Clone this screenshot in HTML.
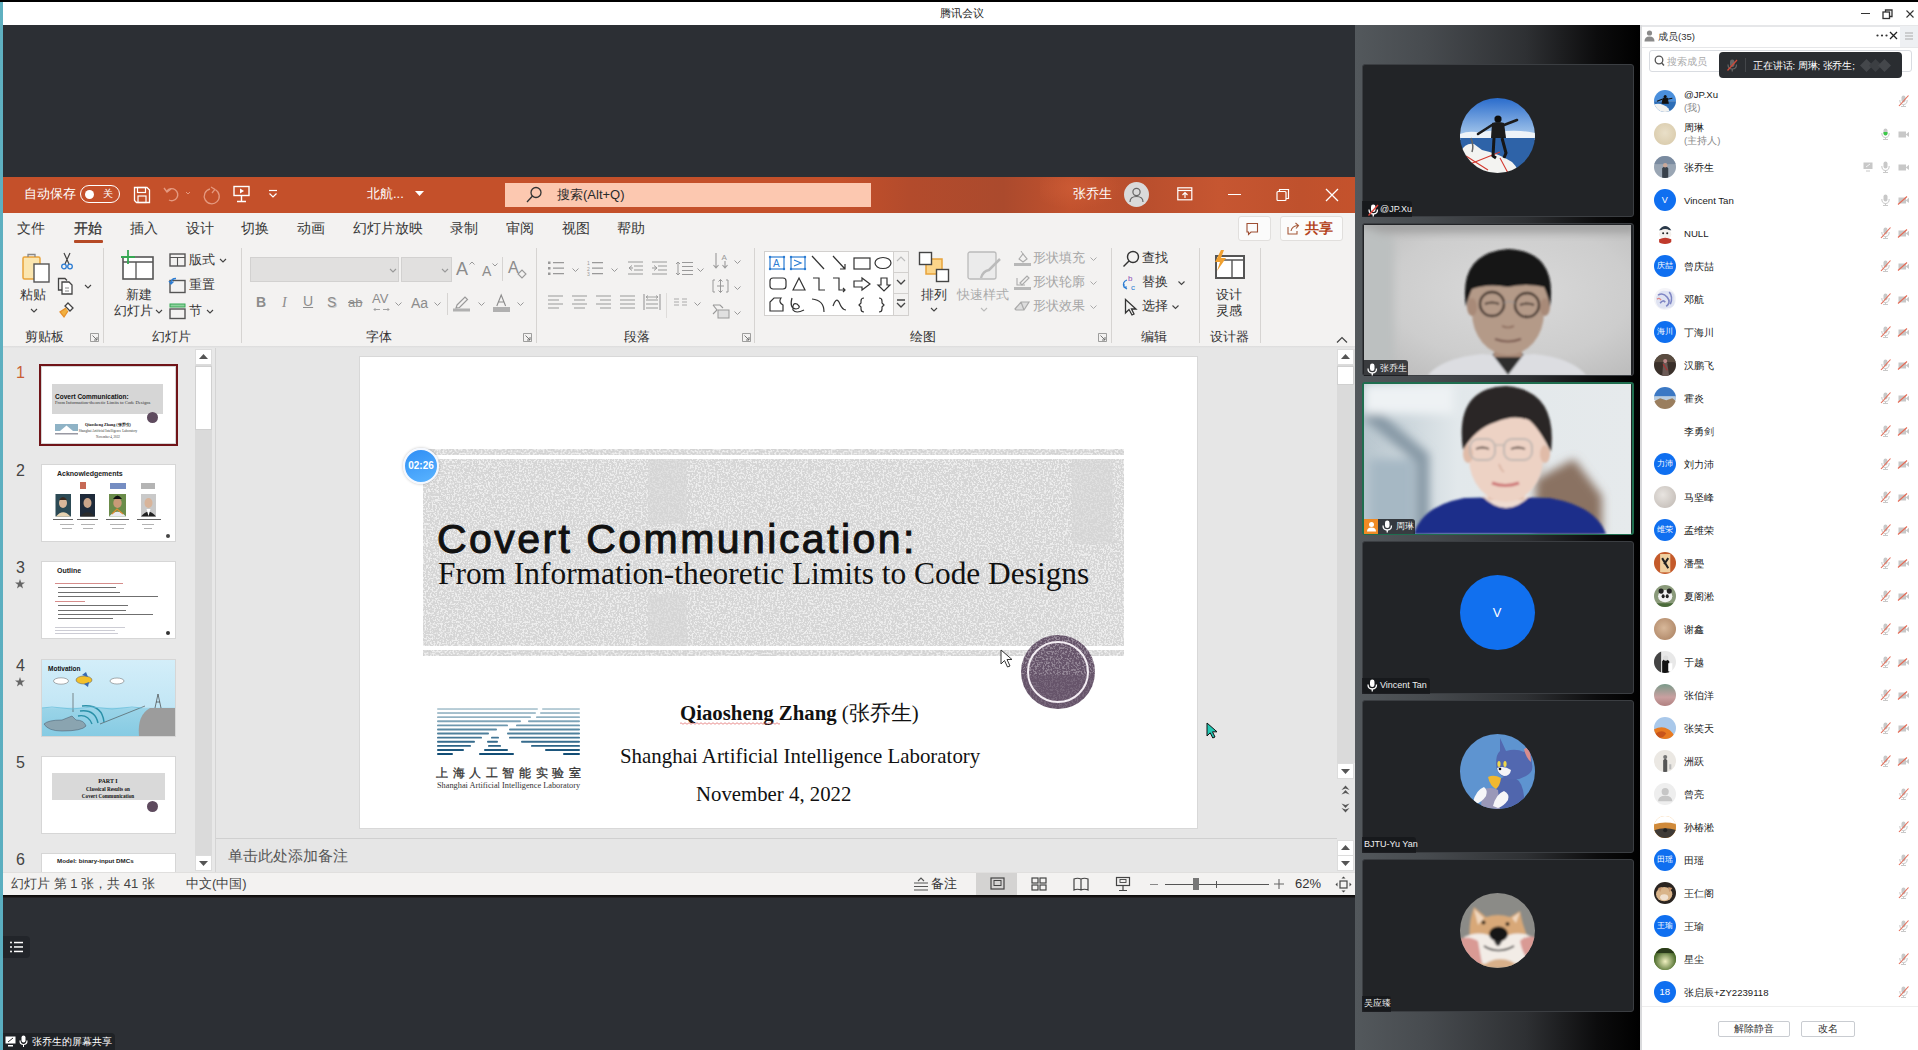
<!DOCTYPE html>
<html><head><meta charset="utf-8"><title>腾讯会议</title>
<style>
html,body{margin:0;padding:0;}
body{width:1918px;height:1050px;position:relative;overflow:hidden;background:#2c2f34;font-family:"Liberation Sans",sans-serif;}
.a{position:absolute;}
.t{position:absolute;white-space:nowrap;}
svg.a{overflow:visible;}
</style></head><body>
<div class="a" style="left:0px;top:0px;width:1918px;height:2px;background:#000;"></div><div class="a" style="left:0px;top:2px;width:1918px;height:23px;background:#fff;"></div><div class="a" style="left:0px;top:2px;width:3px;height:1048px;background:linear-gradient(#5fb0c0,#5aaec0);"></div><div class="t" style="left:662px;width:600px;text-align:center;top:6.0px;height:14px;line-height:14px;font-size:10.6px;color:#222;font-weight:normal;font-family:'Liberation Sans',sans-serif;">腾讯会议</div><div class="a" style="left:1861px;top:13px;width:9px;height:1.1999999999999993px;background:#333;"></div><svg class="a" style="left:1882px;top:9px;" width="12" height="10" viewBox="0 0 12 10"><rect x="1" y="3" width="6.5" height="6.5" fill="none" stroke="#333" stroke-width="1.3"/><path d="M3.5 3 V1 H10 V7.5 H7.5" fill="none" stroke="#333" stroke-width="1.3"/></svg><svg class="a" style="left:1905px;top:9px;" width="10" height="10" viewBox="0 0 10 10"><path d="M1.5 1.5 L8.5 8.5 M8.5 1.5 L1.5 8.5" stroke="#333" stroke-width="1.1"/></svg><div class="a" style="left:3px;top:936px;width:27px;height:22px;background:#22252a;border-radius:0 4px 4px 0;"></div><svg class="a" style="left:10px;top:941px;" width="14" height="12" viewBox="0 0 14 12"><g fill="#fff"><circle cx="1" cy="1.5" r="1"/><circle cx="1" cy="6" r="1"/><circle cx="1" cy="10.5" r="1"/><rect x="4" y="0.8" width="9" height="1.5"/><rect x="4" y="5.2" width="9" height="1.5"/><rect x="4" y="9.7" width="9" height="1.5"/></g></svg><div class="a" style="left:3px;top:1033px;width:112px;height:17px;background:#1f2226;border-radius:0 4px 0 0;"></div><svg class="a" style="left:5px;top:1036px;" width="12" height="11" viewBox="0 0 12 11"><rect x="0.5" y="0.5" width="10" height="7" fill="#fff"/><rect x="3" y="9" width="5" height="1.5" fill="#fff"/><path d="M3 6 L8 2" stroke="#333" stroke-width="1"/></svg><svg class="a" style="left:19px;top:1035px;" width="9" height="13" viewBox="0 0 9 13"><rect x="2.5" y="0.5" width="4" height="7" rx="2" fill="#fff"/><path d="M1 5.5 Q1 9.5 4.5 9.5 Q8 9.5 8 5.5" fill="none" stroke="#fff" stroke-width="1.2"/><rect x="4" y="9.5" width="1" height="2.5" fill="#fff"/></svg><div class="t" style="left:32px;top:1035.0px;height:14px;line-height:14px;font-size:10px;color:#fff;font-weight:normal;font-family:'Liberation Sans',sans-serif;">张乔生的屏幕共享</div><div class="a" style="left:3px;top:177px;width:1352px;height:36px;background:linear-gradient(90deg,#c4502a 0%,#c4502a 62%,#b34b2c 67%,#ab4a2d 74%,#c2522e 79%,#b84e2d 84%,#c65631 90%,#bf512d 96%,#c4522c 100%);"></div><div class="a" style="left:1040px;top:177px;width:90px;height:36px;background:radial-gradient(ellipse at 40% 30%,rgba(215,100,60,.45),rgba(215,100,60,0) 60%)"></div><div class="t" style="left:24px;top:185.0px;height:18px;line-height:18px;font-size:13px;color:#fff;font-weight:normal;font-family:'Liberation Sans',sans-serif;">自动保存</div><div class="a" style="left:80px;top:185px;width:40px;height:18px;background:transparent;border:1.2px solid #fff;border-radius:9px;box-sizing:border-box;"></div><div class="a" style="left:85px;top:190px;width:9px;height:9px;border-radius:50%;background:#fff"></div><div class="t" style="left:103px;top:187.0px;height:14px;line-height:14px;font-size:10px;color:#fff;font-weight:normal;font-family:'Liberation Sans',sans-serif;">关</div><svg class="a" style="left:133px;top:186px;" width="18" height="18" viewBox="0 0 18 18"><path d="M1.5 1.5 H14 L16.5 4 V16.5 H3.5 L1.5 14.5 Z" fill="none" stroke="#fff" stroke-width="1.3"/><rect x="4.5" y="1.5" width="8" height="5" fill="none" stroke="#fff" stroke-width="1.2"/><rect x="5" y="10" width="8" height="6.5" fill="none" stroke="#fff" stroke-width="1.2"/></svg><svg class="a" style="left:163px;top:185px;" width="30" height="18" viewBox="0 0 30 18"><path d="M4 6 A6 6 0 1 1 6 15" fill="none" stroke="#e59a80" stroke-width="1.4"/><path d="M1 3 L4 7 L8 4" fill="none" stroke="#e59a80" stroke-width="1.4"/><path d="M23 7 L25 9 L27 7" fill="none" stroke="#e59a80" stroke-width="1"/></svg><svg class="a" style="left:202px;top:186px;" width="20" height="20" viewBox="0 0 20 20"><path d="M8 3 A7.5 7.5 0 1 0 13.5 3.8" fill="none" stroke="#e59a80" stroke-width="1.3"/><path d="M9 1 L13 3.5 L10 7" fill="none" stroke="#e59a80" stroke-width="1.2"/></svg><svg class="a" style="left:233px;top:185px;" width="18" height="18" viewBox="0 0 18 18"><rect x="1" y="1.5" width="15" height="9" fill="none" stroke="#fff" stroke-width="1.4"/><path d="M7 3.5 L11 6 L7 8.5Z" fill="#fff"/><path d="M8.5 10.5 V16 M4 16.5 H13" stroke="#fff" stroke-width="1.4"/></svg><svg class="a" style="left:268px;top:189px;" width="10" height="10" viewBox="0 0 10 10"><path d="M1 1.5 H9" stroke="#fff" stroke-width="1.2"/><path d="M1.5 4.5 L5 8 L8.5 4.5" fill="none" stroke="#fff" stroke-width="1.2"/></svg><div class="t" style="left:367px;top:185.0px;height:18px;line-height:18px;font-size:13px;color:#fff;font-weight:normal;font-family:'Liberation Sans',sans-serif;">北航...</div><svg class="a" style="left:415px;top:191px;" width="10" height="6" viewBox="0 0 10 6"><path d="M0 0 H9 L4.5 5Z" fill="#fff"/></svg><div class="a" style="left:505px;top:183px;width:366px;height:24px;background:#fcc8b0;"></div><svg class="a" style="left:525px;top:186px;" width="18" height="18" viewBox="0 0 18 18"><circle cx="11" cy="6.5" r="5" fill="none" stroke="#333" stroke-width="1.3"/><path d="M7.5 10 L2 16" stroke="#333" stroke-width="1.3"/></svg><div class="t" style="left:557px;top:186.0px;height:18px;line-height:18px;font-size:13px;color:#2a2a2a;font-weight:normal;font-family:'Liberation Sans',sans-serif;">搜索(Alt+Q)</div><div class="t" style="left:1073px;top:185.0px;height:18px;line-height:18px;font-size:13px;color:#fff;font-weight:normal;font-family:'Liberation Sans',sans-serif;">张乔生</div><div class="a" style="left:1124px;top:182px;width:25px;height:25px;border-radius:50%;background:#dadada"></div><svg class="a" style="left:1128px;top:186px;" width="17" height="17" viewBox="0 0 17 17"><circle cx="8.5" cy="6" r="3.6" fill="none" stroke="#666" stroke-width="1.2"/><path d="M2 16 Q2 10.5 8.5 10.5 Q15 10.5 15 16" fill="none" stroke="#666" stroke-width="1.2"/></svg><svg class="a" style="left:1177px;top:187px;" width="16" height="14" viewBox="0 0 16 14"><rect x="0.8" y="0.8" width="14" height="12" fill="none" stroke="#fff" stroke-width="1.2"/><path d="M1 3.5 H15" stroke="#fff" stroke-width="1.2"/><path d="M8 11 V6 M5.5 8 L8 5.5 L10.5 8" fill="none" stroke="#fff" stroke-width="1.2"/></svg><div class="a" style="left:1228px;top:194px;width:13px;height:1.3000000000000114px;background:#fff;"></div><svg class="a" style="left:1276px;top:188px;" width="14" height="14" viewBox="0 0 14 14"><rect x="1" y="3.5" width="9" height="9" rx="1" fill="none" stroke="#fff" stroke-width="1.2"/><path d="M3.5 3.5 V1.5 H12.5 V10.5 H10" fill="none" stroke="#fff" stroke-width="1.2"/></svg><svg class="a" style="left:1325px;top:188px;" width="14" height="14" viewBox="0 0 14 14"><path d="M1 1 L13 13 M13 1 L1 13" stroke="#fff" stroke-width="1.3"/></svg><div class="a" style="left:3px;top:213px;width:1352px;height:134px;background:#f3f2f1;"></div><div class="a" style="left:3px;top:346px;width:1352px;height:2px;background:linear-gradient(#dcdcdc,#e6e6e6);"></div><div class="t" style="left:17px;top:218.5px;height:19px;line-height:19px;font-size:14px;color:#383838;font-weight:normal;font-family:'Liberation Sans',sans-serif;">文件</div><div class="t" style="left:74px;top:218.5px;height:19px;line-height:19px;font-size:14px;color:#383838;font-weight:normal;font-family:'Liberation Sans',sans-serif;-webkit-text-stroke:0.35px #383838;">开始</div><div class="t" style="left:130px;top:218.5px;height:19px;line-height:19px;font-size:14px;color:#383838;font-weight:normal;font-family:'Liberation Sans',sans-serif;">插入</div><div class="t" style="left:186px;top:218.5px;height:19px;line-height:19px;font-size:14px;color:#383838;font-weight:normal;font-family:'Liberation Sans',sans-serif;">设计</div><div class="t" style="left:241px;top:218.5px;height:19px;line-height:19px;font-size:14px;color:#383838;font-weight:normal;font-family:'Liberation Sans',sans-serif;">切换</div><div class="t" style="left:297px;top:218.5px;height:19px;line-height:19px;font-size:14px;color:#383838;font-weight:normal;font-family:'Liberation Sans',sans-serif;">动画</div><div class="t" style="left:353px;top:218.5px;height:19px;line-height:19px;font-size:14px;color:#383838;font-weight:normal;font-family:'Liberation Sans',sans-serif;">幻灯片放映</div><div class="t" style="left:450px;top:218.5px;height:19px;line-height:19px;font-size:14px;color:#383838;font-weight:normal;font-family:'Liberation Sans',sans-serif;">录制</div><div class="t" style="left:506px;top:218.5px;height:19px;line-height:19px;font-size:14px;color:#383838;font-weight:normal;font-family:'Liberation Sans',sans-serif;">审阅</div><div class="t" style="left:562px;top:218.5px;height:19px;line-height:19px;font-size:14px;color:#383838;font-weight:normal;font-family:'Liberation Sans',sans-serif;">视图</div><div class="t" style="left:617px;top:218.5px;height:19px;line-height:19px;font-size:14px;color:#383838;font-weight:normal;font-family:'Liberation Sans',sans-serif;">帮助</div><div class="a" style="left:74px;top:239.5px;width:29px;height:3.0px;background:#b54a26;border-radius:1px;"></div><div class="a" style="left:1238px;top:216px;width:33px;height:25px;background:#fbfbfb;border:1px solid #e1dfdd;box-sizing:border-box;border-radius:3px;"></div><svg class="a" style="left:1246px;top:222px;" width="14" height="14" viewBox="0 0 14 14"><path d="M1 1.5 H11.5 V10 H5 L2.5 12.5 V10 H1Z" fill="none" stroke="#9e4e32" stroke-width="1.1"/></svg><div class="a" style="left:1280px;top:216px;width:63px;height:25px;background:#fbfbfb;border:1px solid #e1dfdd;box-sizing:border-box;border-radius:3px;"></div><svg class="a" style="left:1287px;top:221px;" width="14" height="14" viewBox="0 0 14 14"><path d="M1 6 V13 H10 V10" fill="none" stroke="#a65a3a" stroke-width="1.1"/><path d="M4 10 Q5 5 11 4.5 M8.5 2 L11.5 4.5 L9 7.5" fill="none" stroke="#a65a3a" stroke-width="1.1"/></svg><div class="t" style="left:1305px;top:218.5px;height:19px;line-height:19px;font-size:14px;color:#b4451f;font-weight:bold;font-family:'Liberation Sans',sans-serif;">共享</div><div class="a" style="left:103px;top:248px;width:1px;height:95px;background:#d6d4d2;"></div><div class="a" style="left:241px;top:248px;width:1px;height:95px;background:#d6d4d2;"></div><div class="a" style="left:536px;top:248px;width:1px;height:95px;background:#d6d4d2;"></div><div class="a" style="left:754px;top:248px;width:1px;height:95px;background:#d6d4d2;"></div><div class="a" style="left:1111px;top:248px;width:1px;height:95px;background:#d6d4d2;"></div><div class="a" style="left:1199px;top:248px;width:1px;height:95px;background:#d6d4d2;"></div><div class="a" style="left:1260px;top:248px;width:1px;height:95px;background:#d6d4d2;"></div><div class="t" style="left:-256px;width:600px;text-align:center;top:328.0px;height:18px;line-height:18px;font-size:13px;color:#333;font-weight:normal;font-family:'Liberation Sans',sans-serif;">剪贴板</div><div class="t" style="left:-129px;width:600px;text-align:center;top:328.0px;height:18px;line-height:18px;font-size:13px;color:#333;font-weight:normal;font-family:'Liberation Sans',sans-serif;">幻灯片</div><div class="t" style="left:79px;width:600px;text-align:center;top:328.0px;height:18px;line-height:18px;font-size:13px;color:#333;font-weight:normal;font-family:'Liberation Sans',sans-serif;">字体</div><div class="t" style="left:337px;width:600px;text-align:center;top:328.0px;height:18px;line-height:18px;font-size:13px;color:#333;font-weight:normal;font-family:'Liberation Sans',sans-serif;">段落</div><div class="t" style="left:623px;width:600px;text-align:center;top:328.0px;height:18px;line-height:18px;font-size:13px;color:#333;font-weight:normal;font-family:'Liberation Sans',sans-serif;">绘图</div><div class="t" style="left:854px;width:600px;text-align:center;top:328.0px;height:18px;line-height:18px;font-size:13px;color:#333;font-weight:normal;font-family:'Liberation Sans',sans-serif;">编辑</div><div class="t" style="left:929px;width:600px;text-align:center;top:328.0px;height:18px;line-height:18px;font-size:13px;color:#333;font-weight:normal;font-family:'Liberation Sans',sans-serif;">设计器</div><svg class="a" style="left:90px;top:333px;" width="9" height="9" viewBox="0 0 9 9"><path d="M0.5 0.5 H8.5 V8.5 H0.5Z" fill="none" stroke="#888" stroke-width="0.8"/><path d="M2.5 2.5 L7 7 M7 4 V7 H4" fill="none" stroke="#666" stroke-width="0.9"/></svg><svg class="a" style="left:523px;top:333px;" width="9" height="9" viewBox="0 0 9 9"><path d="M0.5 0.5 H8.5 V8.5 H0.5Z" fill="none" stroke="#888" stroke-width="0.8"/><path d="M2.5 2.5 L7 7 M7 4 V7 H4" fill="none" stroke="#666" stroke-width="0.9"/></svg><svg class="a" style="left:742px;top:333px;" width="9" height="9" viewBox="0 0 9 9"><path d="M0.5 0.5 H8.5 V8.5 H0.5Z" fill="none" stroke="#888" stroke-width="0.8"/><path d="M2.5 2.5 L7 7 M7 4 V7 H4" fill="none" stroke="#666" stroke-width="0.9"/></svg><svg class="a" style="left:1098px;top:333px;" width="9" height="9" viewBox="0 0 9 9"><path d="M0.5 0.5 H8.5 V8.5 H0.5Z" fill="none" stroke="#888" stroke-width="0.8"/><path d="M2.5 2.5 L7 7 M7 4 V7 H4" fill="none" stroke="#666" stroke-width="0.9"/></svg><svg class="a" style="left:1336px;top:336px;" width="12" height="8" viewBox="0 0 12 8"><path d="M1 6.5 L6 1.5 L11 6.5" fill="none" stroke="#444" stroke-width="1.2"/></svg><svg class="a" style="left:21px;top:252px;" width="32" height="32" viewBox="0 0 32 32"><rect x="2" y="5" width="17" height="22" rx="1.5" fill="#fbe6b0" stroke="#e8a33a" stroke-width="1.5"/><path d="M7 5 V2.5 H14 V5" fill="none" stroke="#888" stroke-width="1.3"/><rect x="13" y="12" width="15" height="18" fill="#fff" stroke="#555" stroke-width="1.4"/></svg><div class="t" style="left:-267px;width:600px;text-align:center;top:286.0px;height:18px;line-height:18px;font-size:13px;color:#333;font-weight:normal;font-family:'Liberation Sans',sans-serif;">粘贴</div><svg class="a" style="left:30px;top:308px;" width="8" height="5" viewBox="0 0 8 5"><path d="M1 1 L4 4 L7 1" fill="none" stroke="#444" stroke-width="1.1"/></svg><svg class="a" style="left:60px;top:252px;" width="14" height="18" viewBox="0 0 14 18"><path d="M4 1 L9 12 M10 1 L5 12" stroke="#444" stroke-width="1.2"/><circle cx="4" cy="14.5" r="2.3" fill="none" stroke="#2b7cd3" stroke-width="1.3"/><circle cx="10" cy="14.5" r="2.3" fill="none" stroke="#2b7cd3" stroke-width="1.3"/></svg><svg class="a" style="left:57px;top:277px;" width="20" height="18" viewBox="0 0 20 18"><path d="M5 13 H1.5 V1.5 H8 L10 3.5" fill="none" stroke="#444" stroke-width="1.3"/><path d="M5 5 H12 L15 8 V17 H5Z" fill="#fff" stroke="#444" stroke-width="1.3"/><path d="M8 11 H12 M8 14 H12" stroke="#888"/></svg><svg class="a" style="left:84px;top:284px;" width="8" height="5" viewBox="0 0 8 5"><path d="M1 1 L4 4 L7 1" fill="none" stroke="#444" stroke-width="1.1"/></svg><svg class="a" style="left:58px;top:301px;" width="18" height="18" viewBox="0 0 18 18"><path d="M10 2 L15 7 L12 10 L7 5Z" fill="#fff" stroke="#444" stroke-width="1.3"/><path d="M8 7 L2 11 L6 16 L10 10" fill="#f0b040" stroke="#e8902a" stroke-width="1.3"/></svg><svg class="a" style="left:121px;top:249px;" width="34" height="32" viewBox="0 0 34 32"><rect x="2" y="8" width="30" height="22" fill="#fff" stroke="#555" stroke-width="1.6"/><path d="M2 13 H32 M15 13 V30" stroke="#555" stroke-width="1.3"/><path d="M7 1 V15 M0 8 H14" stroke="#35a852" stroke-width="1.8"/></svg><div class="t" style="left:-161px;width:600px;text-align:center;top:286.0px;height:18px;line-height:18px;font-size:13px;color:#333;font-weight:normal;font-family:'Liberation Sans',sans-serif;">新建</div><div class="t" style="left:114px;top:302.0px;height:18px;line-height:18px;font-size:13px;color:#333;font-weight:normal;font-family:'Liberation Sans',sans-serif;">幻灯片</div><svg class="a" style="left:155px;top:309px;" width="8" height="5" viewBox="0 0 8 5"><path d="M1 1 L4 4 L7 1" fill="none" stroke="#444" stroke-width="1.1"/></svg><svg class="a" style="left:169px;top:253px;" width="17" height="14" viewBox="0 0 17 14"><rect x="1" y="1" width="15" height="12" fill="none" stroke="#555" stroke-width="1.4"/><path d="M1 4.5 H16 M8.5 4.5 V13" stroke="#555" stroke-width="1.1"/></svg><div class="t" style="left:189px;top:251.0px;height:18px;line-height:18px;font-size:13px;color:#333;font-weight:normal;font-family:'Liberation Sans',sans-serif;">版式</div><svg class="a" style="left:219px;top:258px;" width="8" height="5" viewBox="0 0 8 5"><path d="M1 1 L4 4 L7 1" fill="none" stroke="#444" stroke-width="1.1"/></svg><svg class="a" style="left:168px;top:277px;" width="19" height="16" viewBox="0 0 19 16"><rect x="2" y="3.5" width="15" height="12" fill="none" stroke="#555" stroke-width="1.4"/><path d="M8 1.5 Q3 1.5 3 6 M1 4 L3 7 L5.5 4.5" fill="none" stroke="#2b7cd3" stroke-width="1.3"/></svg><div class="t" style="left:189px;top:276.0px;height:18px;line-height:18px;font-size:13px;color:#333;font-weight:normal;font-family:'Liberation Sans',sans-serif;">重置</div><svg class="a" style="left:169px;top:303px;" width="17" height="16" viewBox="0 0 17 16"><rect x="1" y="1" width="15" height="3" fill="#8fd19e" stroke="#35a852" stroke-width="1"/><rect x="1" y="6" width="15" height="9.5" fill="none" stroke="#555" stroke-width="1.4"/></svg><div class="t" style="left:189px;top:302.0px;height:18px;line-height:18px;font-size:13px;color:#333;font-weight:normal;font-family:'Liberation Sans',sans-serif;">节</div><svg class="a" style="left:206px;top:309px;" width="8" height="5" viewBox="0 0 8 5"><path d="M1 1 L4 4 L7 1" fill="none" stroke="#444" stroke-width="1.1"/></svg><div class="a" style="left:250px;top:257px;width:149px;height:25px;background:#e1e0df;border:1px solid #d2d1d0;box-sizing:border-box;"></div><div class="a" style="left:401px;top:257px;width:51px;height:25px;background:#e1e0df;border:1px solid #d2d1d0;box-sizing:border-box;"></div><svg class="a" style="left:389px;top:268px;" width="8" height="5" viewBox="0 0 8 5"><path d="M1 1 L4 4 L7 1" fill="none" stroke="#999" stroke-width="1.1"/></svg><svg class="a" style="left:441px;top:268px;" width="8" height="5" viewBox="0 0 8 5"><path d="M1 1 L4 4 L7 1" fill="none" stroke="#999" stroke-width="1.1"/></svg><div class="t" style="left:456px;top:256.5px;height:25px;line-height:25px;font-size:18px;color:#8c8c8c;font-weight:normal;font-family:'Liberation Sans',sans-serif;">A</div><svg class="a" style="left:469px;top:261px;" width="6" height="4" viewBox="0 0 6 4"><path d="M0.5 3.5 L3 1 L5.5 3.5" fill="none" stroke="#999" stroke-width="1"/></svg><div class="t" style="left:482px;top:261.5px;height:19px;line-height:19px;font-size:14px;color:#8c8c8c;font-weight:normal;font-family:'Liberation Sans',sans-serif;">A</div><svg class="a" style="left:492px;top:263px;" width="6" height="4" viewBox="0 0 6 4"><path d="M0.5 0.5 L3 3 L5.5 0.5" fill="none" stroke="#999" stroke-width="1"/></svg><div class="a" style="left:502px;top:257px;width:1px;height:24px;background:#d6d4d2;"></div><div class="t" style="left:508px;top:257.0px;height:22px;line-height:22px;font-size:16px;color:#8c8c8c;font-weight:normal;font-family:'Liberation Sans',sans-serif;">A</div><svg class="a" style="left:516px;top:268px;" width="12" height="10" viewBox="0 0 12 10"><path d="M2 6 L6 2 L10 6 L6 10Z" fill="none" stroke="#999" stroke-width="1.1"/></svg><div class="t" style="left:256px;top:292.5px;height:19px;line-height:19px;font-size:14px;color:#8c8c8c;font-weight:bold;font-family:'Liberation Sans',sans-serif;">B</div><div class="t" style="left:282px;top:292.5px;height:19px;line-height:19px;font-size:14px;color:#8c8c8c;font-weight:normal;font-family:'Liberation Serif',serif;"><i>I</i></div><div class="t" style="left:303px;top:291.5px;height:19px;line-height:19px;font-size:14px;color:#8c8c8c;font-weight:normal;font-family:'Liberation Sans',sans-serif;"><u>U</u></div><div class="t" style="left:327px;top:292.5px;height:19px;line-height:19px;font-size:14px;color:#8c8c8c;font-weight:normal;font-family:'Liberation Sans',sans-serif;text-shadow:1px 1px 0 #c8c8c8;">S</div><div class="t" style="left:348px;top:294.0px;height:18px;line-height:18px;font-size:13px;color:#8c8c8c;font-weight:normal;font-family:'Liberation Sans',sans-serif;"><s>ab</s></div><div class="t" style="left:372px;top:290.0px;height:18px;line-height:18px;font-size:13px;color:#8c8c8c;font-weight:normal;font-family:'Liberation Sans',sans-serif;">AV</div><svg class="a" style="left:373px;top:307px;" width="17" height="5" viewBox="0 0 17 5"><path d="M1 2.5 H7 M2.5 1 L1 2.5 L2.5 4 M10 2.5 H16 M14.5 1 L16 2.5 L14.5 4" fill="none" stroke="#999" stroke-width="0.9"/></svg><div class="t" style="left:411px;top:293.5px;height:19px;line-height:19px;font-size:14px;color:#8c8c8c;font-weight:normal;font-family:'Liberation Sans',sans-serif;">Aa</div><svg class="a" style="left:395px;top:302px;" width="7" height="4" viewBox="0 0 7 4"><path d="M0.5 0.5 L3.5 3.5 L6.5 0.5" fill="none" stroke="#999" stroke-width="1"/></svg><svg class="a" style="left:434px;top:302px;" width="7" height="4" viewBox="0 0 7 4"><path d="M0.5 0.5 L3.5 3.5 L6.5 0.5" fill="none" stroke="#999" stroke-width="1"/></svg><svg class="a" style="left:478px;top:302px;" width="7" height="4" viewBox="0 0 7 4"><path d="M0.5 0.5 L3.5 3.5 L6.5 0.5" fill="none" stroke="#999" stroke-width="1"/></svg><svg class="a" style="left:517px;top:302px;" width="7" height="4" viewBox="0 0 7 4"><path d="M0.5 0.5 L3.5 3.5 L6.5 0.5" fill="none" stroke="#999" stroke-width="1"/></svg><div class="a" style="left:447px;top:293px;width:1px;height:22px;background:#d6d4d2;"></div><svg class="a" style="left:452px;top:294px;" width="19" height="18" viewBox="0 0 19 18"><path d="M5 11 L13 3 L15.5 5.5 L7.5 13.5 L4 14Z" fill="none" stroke="#999" stroke-width="1.2"/><rect x="1" y="14.5" width="17" height="3" fill="#b0b0b0"/></svg><svg class="a" style="left:496px;top:294px;" width="11" height="13" viewBox="0 0 11 13"><path d="M0.8 12 L5.2 1 L9.6 12 M2.5 8 H8" fill="none" stroke="#8c8c8c" stroke-width="1.1"/></svg><div class="a" style="left:493px;top:307px;width:17px;height:4.5px;background:#b0b0b0;"></div><svg class="a" style="left:548px;top:261px;" width="17" height="15" viewBox="0 0 17 15"><g fill="#999"><rect x="0" y="0.5" width="2.5" height="2.5"/><rect x="0" y="6" width="2.5" height="2.5"/><rect x="0" y="11.5" width="2.5" height="2.5"/></g><path d="M5 1.7 H16 M5 7.2 H16 M5 12.7 H16" stroke="#999" stroke-width="1.2"/></svg><svg class="a" style="left:587px;top:260px;" width="17" height="16" viewBox="0 0 17 16"><text x="0" y="5" font-size="5" fill="#999">1</text><text x="0" y="10.5" font-size="5" fill="#999">2</text><text x="0" y="16" font-size="5" fill="#999">3</text><path d="M5 2.7 H16 M5 8.2 H16 M5 13.7 H16" stroke="#999" stroke-width="1.2"/></svg><svg class="a" style="left:628px;top:261px;" width="16" height="15" viewBox="0 0 16 15"><path d="M0 1 H15 M6 5 H15 M6 9 H15 M0 13 H15" stroke="#999" stroke-width="1.2"/><path d="M4 4.5 L1 7 L4 9.5 M1 7 H5" fill="none" stroke="#999" stroke-width="1"/></svg><svg class="a" style="left:652px;top:261px;" width="16" height="15" viewBox="0 0 16 15"><path d="M0 1 H15 M6 5 H15 M6 9 H15 M0 13 H15" stroke="#999" stroke-width="1.2"/><path d="M2 4.5 L5 7 L2 9.5 M0 7 H5" fill="none" stroke="#999" stroke-width="1"/></svg><svg class="a" style="left:675px;top:261px;" width="19" height="15" viewBox="0 0 19 15"><path d="M7 1.5 H18 M7 5.5 H18 M7 9.5 H18 M7 13.5 H18" stroke="#999" stroke-width="1.2"/><path d="M3 1 V14 M1 3 L3 1 L5 3 M1 12 L3 14 L5 12" fill="none" stroke="#999" stroke-width="1"/></svg><svg class="a" style="left:572px;top:268px;" width="7" height="4" viewBox="0 0 7 4"><path d="M0.5 0.5 L3.5 3.5 L6.5 0.5" fill="none" stroke="#999" stroke-width="1"/></svg><svg class="a" style="left:611px;top:268px;" width="7" height="4" viewBox="0 0 7 4"><path d="M0.5 0.5 L3.5 3.5 L6.5 0.5" fill="none" stroke="#999" stroke-width="1"/></svg><svg class="a" style="left:697px;top:268px;" width="7" height="4" viewBox="0 0 7 4"><path d="M0.5 0.5 L3.5 3.5 L6.5 0.5" fill="none" stroke="#999" stroke-width="1"/></svg><svg class="a" style="left:734px;top:260px;" width="7" height="4" viewBox="0 0 7 4"><path d="M0.5 0.5 L3.5 3.5 L6.5 0.5" fill="none" stroke="#999" stroke-width="1"/></svg><svg class="a" style="left:734px;top:286px;" width="7" height="4" viewBox="0 0 7 4"><path d="M0.5 0.5 L3.5 3.5 L6.5 0.5" fill="none" stroke="#999" stroke-width="1"/></svg><svg class="a" style="left:694px;top:302px;" width="7" height="4" viewBox="0 0 7 4"><path d="M0.5 0.5 L3.5 3.5 L6.5 0.5" fill="none" stroke="#999" stroke-width="1"/></svg><svg class="a" style="left:734px;top:311px;" width="7" height="4" viewBox="0 0 7 4"><path d="M0.5 0.5 L3.5 3.5 L6.5 0.5" fill="none" stroke="#999" stroke-width="1"/></svg><svg class="a" style="left:713px;top:252px;" width="17" height="18" viewBox="0 0 17 18"><path d="M3 1 V16 M0.5 13 L3 16 L5.5 13 M12 9 V16 M9.5 13 L12 16 L14.5 13" fill="none" stroke="#999" stroke-width="1.1"/><text x="8.5" y="8" font-size="8" fill="#999" font-family="Liberation Sans">A</text></svg><svg class="a" style="left:712px;top:279px;" width="17" height="15" viewBox="0 0 17 15"><path d="M3 1 H1 V13 H3 M14 1 H16 V13 H14 M8.5 0.5 V13.5 M6.5 2.5 L8.5 0.5 L10.5 2.5 M6.5 11.5 L8.5 13.5 L10.5 11.5 M5 7 H12" fill="none" stroke="#999" stroke-width="1"/></svg><svg class="a" style="left:712px;top:304px;" width="18" height="15" viewBox="0 0 18 15"><path d="M1 1 H8 L11 4 M1 1 L5 6 L1 10" fill="none" stroke="#999" stroke-width="1.1"/><rect x="6" y="6" width="11" height="8" fill="#e0e0e0" stroke="#999" stroke-width="1"/></svg><svg class="a" style="left:548px;top:295px;" width="17" height="14" viewBox="0 0 17 14"><path d="M0 1 H15 M0 5 H11 M0 9 H15 M0 13 H11" stroke="#999" stroke-width="1.2"/></svg><svg class="a" style="left:572px;top:295px;" width="17" height="14" viewBox="0 0 17 14"><path d="M0 1 H15 M2 5 H13 M0 9 H15 M2 13 H13" stroke="#999" stroke-width="1.2"/></svg><svg class="a" style="left:596px;top:295px;" width="17" height="14" viewBox="0 0 17 14"><path d="M0 1 H15 M4 5 H15 M0 9 H15 M4 13 H15" stroke="#999" stroke-width="1.2"/></svg><svg class="a" style="left:620px;top:295px;" width="17" height="14" viewBox="0 0 17 14"><path d="M0 1 H15 M0 5 H15 M0 9 H15 M0 13 H15" stroke="#999" stroke-width="1.2"/></svg><svg class="a" style="left:643px;top:294px;" width="18" height="17" viewBox="0 0 18 17"><path d="M1 0 V16 M17 0 V16 M3 6 H15 M3 10 H15 M3 14 H15" stroke="#999" stroke-width="1.1"/><path d="M3 3 H15 M5 1.5 L3 3 L5 4.5 M13 1.5 L15 3 L13 4.5" fill="none" stroke="#999" stroke-width="0.9"/></svg><div class="a" style="left:666px;top:293px;width:1px;height:25px;background:#dedcda;"></div><svg class="a" style="left:674px;top:298px;" width="14" height="8" viewBox="0 0 14 8"><path d="M0 1 H5 M0 4 H5 M0 7 H5 M8 1 H13 M8 4 H13 M8 7 H13" stroke="#aaa" stroke-width="1"/></svg><div class="a" style="left:764px;top:251px;width:130px;height:65px;background:#fff;border:1px solid #d2d0ce;box-sizing:border-box;"></div><div class="a" style="left:893px;top:251px;width:16px;height:65px;background:#f3f2f1;border:1px solid #d2d0ce;box-sizing:border-box;"></div><div class="a" style="left:894px;top:272px;width:14px;height:1px;background:#d2d0ce;"></div><div class="a" style="left:894px;top:293px;width:14px;height:1px;background:#d2d0ce;"></div><svg class="a" style="left:896px;top:256px;" width="10" height="6" viewBox="0 0 10 6"><path d="M1 5 L5 1 L9 5" fill="none" stroke="#bbb" stroke-width="1.1"/></svg><svg class="a" style="left:896px;top:279px;" width="10" height="6" viewBox="0 0 10 6"><path d="M1 1 L5 5 L9 1" fill="none" stroke="#444" stroke-width="1.3"/></svg><svg class="a" style="left:896px;top:299px;" width="10" height="9" viewBox="0 0 10 9"><path d="M1 1 H9 M1 4 L5 8 L9 4" fill="none" stroke="#444" stroke-width="1.3"/></svg><svg class="a" style="left:766px;top:252px;" width="128" height="64" viewBox="0 0 128 64"><g fill="none" stroke="#333" stroke-width="1.2"><rect x="4" y="5" width="14" height="12" stroke="#2b7cd3"/><text x="7" y="15" font-size="10" fill="#2b7cd3" stroke="none" font-family="Liberation Sans">A</text><rect x="25" y="5" width="14" height="12" stroke="#2b7cd3"/><path d="M28 8 L35 11 L28 14" stroke="#2b7cd3"/><circle cx="4" cy="5" r="1.2" fill="#2b7cd3" stroke="none"/><circle cx="4" cy="17" r="1.2" fill="#2b7cd3" stroke="none"/><circle cx="18" cy="5" r="1.2" fill="#2b7cd3" stroke="none"/><circle cx="18" cy="17" r="1.2" fill="#2b7cd3" stroke="none"/><circle cx="25" cy="5" r="1.2" fill="#2b7cd3" stroke="none"/><circle cx="25" cy="17" r="1.2" fill="#2b7cd3" stroke="none"/><circle cx="39" cy="5" r="1.2" fill="#2b7cd3" stroke="none"/><circle cx="39" cy="17" r="1.2" fill="#2b7cd3" stroke="none"/><path d="M46 4 L58 17"/><path d="M67 4 L79 17 M79 12 V17 H74"/><rect x="88" y="6" width="16" height="11"/><ellipse cx="117" cy="11" rx="8" ry="5.5"/><rect x="4" y="26" width="16" height="11" rx="3"/><path d="M27 38 L33 26 L39 38Z"/><path d="M47 26 H53 V38 H59"/><path d="M67 26 H73 V38 H79 M77 36 L79 38 L77 40"/><path d="M88 29 H96 V26 L104 32 L96 38 V35 H88Z"/><path d="M115 26 H121 V33 H124 L118 39 L112 33 H115Z"/><path d="M4 59 V50 L8 46 H15 Q12 50 17 53 V59Z"/><path d="M26 46 Q23 56 30 57 Q36 56 31 52 Q26 50 27 58 Q30 62 38 58"/><path d="M46 47 Q58 48 58 60"/><path d="M67 54 Q70 45 73 50 Q76 58 80 58"/><path d="M98 46 Q95 46 95 49 V51 L93 53 L95 55 V57 Q95 60 98 60"/><path d="M113 46 Q116 46 116 49 V51 L118 53 L116 55 V57 Q116 60 113 60"/></g></svg><svg class="a" style="left:918px;top:251px;" width="32" height="32" viewBox="0 0 32 32"><rect x="8" y="8" width="16" height="15" fill="#fbd58a" stroke="#e8a33a" stroke-width="1.5"/><rect x="1.5" y="1.5" width="12" height="12" fill="#fff" stroke="#444" stroke-width="1.4"/><rect x="18.5" y="18.5" width="12" height="12" fill="#fff" stroke="#444" stroke-width="1.4"/></svg><div class="t" style="left:634px;width:600px;text-align:center;top:286.0px;height:18px;line-height:18px;font-size:13px;color:#333;font-weight:normal;font-family:'Liberation Sans',sans-serif;">排列</div><svg class="a" style="left:930px;top:307px;" width="8" height="5" viewBox="0 0 8 5"><path d="M1 1 L4 4 L7 1" fill="none" stroke="#444" stroke-width="1.1"/></svg><svg class="a" style="left:967px;top:251px;" width="34" height="34" viewBox="0 0 34 34"><rect x="1" y="1" width="28" height="27" rx="2" fill="#ebebeb" stroke="#bbb" stroke-width="1.3"/><path d="M14 27 Q16 20 22 19 L33 8" fill="none" stroke="#bbb" stroke-width="2.5"/></svg><div class="t" style="left:683px;width:600px;text-align:center;top:286.0px;height:18px;line-height:18px;font-size:13px;color:#aaa;font-weight:normal;font-family:'Liberation Sans',sans-serif;">快速样式</div><svg class="a" style="left:980px;top:307px;" width="8" height="5" viewBox="0 0 8 5"><path d="M1 1 L4 4 L7 1" fill="none" stroke="#bbb" stroke-width="1.1"/></svg><div class="t" style="left:1033px;top:249.0px;height:18px;line-height:18px;font-size:13px;color:#a6a6a6;font-weight:normal;font-family:'Liberation Sans',sans-serif;">形状填充</div><svg class="a" style="left:1090px;top:257px;" width="7" height="4" viewBox="0 0 7 4"><path d="M0.5 0.5 L3.5 3.5 L6.5 0.5" fill="none" stroke="#aaa" stroke-width="1"/></svg><div class="t" style="left:1033px;top:273.0px;height:18px;line-height:18px;font-size:13px;color:#a6a6a6;font-weight:normal;font-family:'Liberation Sans',sans-serif;">形状轮廓</div><svg class="a" style="left:1090px;top:281px;" width="7" height="4" viewBox="0 0 7 4"><path d="M0.5 0.5 L3.5 3.5 L6.5 0.5" fill="none" stroke="#aaa" stroke-width="1"/></svg><div class="t" style="left:1033px;top:297.0px;height:18px;line-height:18px;font-size:13px;color:#a6a6a6;font-weight:normal;font-family:'Liberation Sans',sans-serif;">形状效果</div><svg class="a" style="left:1090px;top:305px;" width="7" height="4" viewBox="0 0 7 4"><path d="M0.5 0.5 L3.5 3.5 L6.5 0.5" fill="none" stroke="#aaa" stroke-width="1"/></svg><svg class="a" style="left:1014px;top:250px;" width="17" height="16" viewBox="0 0 17 16"><path d="M5 9 L9 4 L13 9 L9 12Z" fill="none" stroke="#aaa" stroke-width="1.2"/><path d="M9 4 L7 1" stroke="#aaa"/><rect x="0" y="13" width="17" height="3" fill="#b8b8b8"/></svg><svg class="a" style="left:1014px;top:274px;" width="17" height="16" viewBox="0 0 17 16"><path d="M3 4 V11 H11" fill="none" stroke="#aaa" stroke-width="1.1"/><path d="M6 9 L13 2 L15 4 L8 11Z" fill="none" stroke="#aaa" stroke-width="1.2"/><rect x="0" y="13" width="17" height="3" fill="#b8b8b8"/></svg><svg class="a" style="left:1014px;top:298px;" width="17" height="16" viewBox="0 0 17 16"><path d="M1 11 L7 4 H15 L10 12 H2Z M7 4 L10 12" fill="#ddd" stroke="#aaa" stroke-width="1.2"/></svg><svg class="a" style="left:1122px;top:250px;" width="18" height="18" viewBox="0 0 18 18"><circle cx="11" cy="7" r="5.5" fill="none" stroke="#333" stroke-width="1.4"/><path d="M7 11 L1.5 16.5" stroke="#333" stroke-width="1.5"/></svg><div class="t" style="left:1142px;top:249.0px;height:18px;line-height:18px;font-size:13px;color:#333;font-weight:normal;font-family:'Liberation Sans',sans-serif;">查找</div><svg class="a" style="left:1121px;top:274px;" width="18" height="18" viewBox="0 0 18 18"><text x="7" y="7" font-size="8" fill="#8b4fb5" font-family="Liberation Sans">b</text><text x="10" y="16" font-size="8" fill="#2b7cd3" font-family="Liberation Sans">c</text><path d="M6 6 Q1 8 3 13 L6 15 M3 10 L3 13 L6 13" fill="none" stroke="#2b7cd3" stroke-width="1.2"/></svg><div class="t" style="left:1142px;top:273.0px;height:18px;line-height:18px;font-size:13px;color:#333;font-weight:normal;font-family:'Liberation Sans',sans-serif;">替换</div><svg class="a" style="left:1178px;top:281px;" width="7" height="4" viewBox="0 0 7 4"><path d="M0.5 0.5 L3.5 3.5 L6.5 0.5" fill="none" stroke="#444" stroke-width="1.1"/></svg><svg class="a" style="left:1124px;top:298px;" width="14" height="18" viewBox="0 0 14 18"><path d="M1.5 1.5 V15 L5 11.5 L8 17 L10 16 L7.5 11 H12Z" fill="none" stroke="#333" stroke-width="1.3"/></svg><div class="t" style="left:1142px;top:297.0px;height:18px;line-height:18px;font-size:13px;color:#333;font-weight:normal;font-family:'Liberation Sans',sans-serif;">选择</div><svg class="a" style="left:1172px;top:305px;" width="7" height="4" viewBox="0 0 7 4"><path d="M0.5 0.5 L3.5 3.5 L6.5 0.5" fill="none" stroke="#444" stroke-width="1.1"/></svg><svg class="a" style="left:1212px;top:250px;" width="34" height="32" viewBox="0 0 34 32"><rect x="4" y="6" width="28" height="22" fill="#fff" stroke="#555" stroke-width="2"/><path d="M4 10 H32 M20 10 V28" stroke="#555" stroke-width="1.4"/><path d="M9 0 L3 12 H8 L5 21 L14 8 H9 L12 0Z" fill="#f0a030"/></svg><div class="t" style="left:929px;width:600px;text-align:center;top:286.0px;height:18px;line-height:18px;font-size:13px;color:#333;font-weight:normal;font-family:'Liberation Sans',sans-serif;">设计</div><div class="t" style="left:929px;width:600px;text-align:center;top:302.0px;height:18px;line-height:18px;font-size:13px;color:#333;font-weight:normal;font-family:'Liberation Sans',sans-serif;">灵感</div><div class="a" style="left:3px;top:348px;width:1352px;height:524px;background:#e6e6e6;"></div><div class="a" style="left:3px;top:348px;width:212px;height:524px;background:#e8e8e8;"></div><div class="a" style="left:215px;top:348px;width:1px;height:524px;background:#d4d4d4;"></div><div class="a" style="left:195px;top:349px;width:17px;height:522px;background:#dadada;"></div><div class="a" style="left:195px;top:349px;width:17px;height:16px;background:#fff;border:1px solid #dcdcdc;box-sizing:border-box;"></div><svg class="a" style="left:199px;top:354px;" width="9" height="5" viewBox="0 0 9 5"><path d="M0 5 L4.5 0 L9 5Z" fill="#555"/></svg><div class="a" style="left:195px;top:366px;width:17px;height:64px;background:#fff;border:1px solid #d0d0d0;box-sizing:border-box;"></div><div class="a" style="left:195px;top:855px;width:17px;height:16px;background:#fff;border:1px solid #dcdcdc;box-sizing:border-box;"></div><svg class="a" style="left:199px;top:861px;" width="9" height="5" viewBox="0 0 9 5"><path d="M0 0 L4.5 5 L9 0Z" fill="#555"/></svg><div class="t" style="left:16px;top:362.0px;height:22px;line-height:22px;font-size:16px;color:#c95f35;font-weight:normal;font-family:'Liberation Sans',sans-serif;">1</div><div class="t" style="left:16px;top:460.0px;height:22px;line-height:22px;font-size:16px;color:#444;font-weight:normal;font-family:'Liberation Sans',sans-serif;">2</div><div class="t" style="left:16px;top:557.0px;height:22px;line-height:22px;font-size:16px;color:#444;font-weight:normal;font-family:'Liberation Sans',sans-serif;">3</div><svg class="a" style="left:15px;top:579px;" width="10" height="10" viewBox="0 0 10 10"><path d="M5 0 L6.2 3.6 H10 L7 5.8 L8 9.5 L5 7.2 L2 9.5 L3 5.8 L0 3.6 H3.8Z" fill="#666"/></svg><div class="t" style="left:16px;top:655.0px;height:22px;line-height:22px;font-size:16px;color:#444;font-weight:normal;font-family:'Liberation Sans',sans-serif;">4</div><svg class="a" style="left:15px;top:677px;" width="10" height="10" viewBox="0 0 10 10"><path d="M5 0 L6.2 3.6 H10 L7 5.8 L8 9.5 L5 7.2 L2 9.5 L3 5.8 L0 3.6 H3.8Z" fill="#666"/></svg><div class="t" style="left:16px;top:752.0px;height:22px;line-height:22px;font-size:16px;color:#444;font-weight:normal;font-family:'Liberation Sans',sans-serif;">5</div><div class="t" style="left:16px;top:849.0px;height:22px;line-height:22px;font-size:16px;color:#444;font-weight:normal;font-family:'Liberation Sans',sans-serif;">6</div><div class="a" style="left:39px;top:364px;width:139px;height:82px;background:transparent;border:3px solid #701418;box-sizing:border-box;"></div><div class="a" style="left:42px;top:367px;width:133px;height:76px;background:#fff;box-shadow:0 0 0 1px #d6d6d6;"></div><div class="a" style="left:42px;top:465px;width:133px;height:76px;background:#fff;box-shadow:0 0 0 1px #d6d6d6;"></div><div class="a" style="left:42px;top:562px;width:133px;height:76px;background:#fff;box-shadow:0 0 0 1px #d6d6d6;"></div><div class="a" style="left:42px;top:660px;width:133px;height:76px;background:#fff;box-shadow:0 0 0 1px #d6d6d6;"></div><div class="a" style="left:42px;top:757px;width:133px;height:76px;background:#fff;box-shadow:0 0 0 1px #d6d6d6;"></div><div class="a" style="left:42px;top:854px;width:133px;height:18px;background:#fff;box-shadow:0 0 0 1px #d6d6d6;"></div><div class="a" style="left:52px;top:384px;width:111px;height:30px;background:#d6d6d6;"></div><div class="t" style="left:55px;top:391.5px;height:9px;line-height:9px;font-size:6.5px;color:#111;font-weight:bold;font-family:'Liberation Sans',sans-serif;">Covert Communication:</div><div class="t" style="left:55px;top:400.0px;height:6px;line-height:6px;font-size:4.6px;color:#333;font-weight:normal;font-family:'Liberation Serif',serif;">From Information-theoretic Limits to Code Designs</div><div class="a" style="left:147px;top:412px;width:11px;height:11px;border-radius:50%;background:#5e4a5e"></div><svg class="a" style="left:55px;top:424px;" width="23" height="12" viewBox="0 0 23 12"><rect width="23" height="7" fill="#8fb3c6"/><path d="M5 7 L11.5 1.5 L18 7Z" fill="#fff"/><rect y="9" width="23" height="1.5" fill="#556" opacity=".6"/></svg><div class="t" style="left:-192px;width:600px;text-align:center;top:421.5px;height:5px;line-height:5px;font-size:4px;color:#111;font-weight:bold;font-family:'Liberation Serif',serif;">Qiaosheng Zhang (张乔生)</div><div class="t" style="left:-192px;width:600px;text-align:center;top:429.0px;height:4px;line-height:4px;font-size:3.4px;color:#333;font-weight:normal;font-family:'Liberation Serif',serif;">Shanghai Artificial Intelligence Laboratory</div><div class="t" style="left:-192px;width:600px;text-align:center;top:435.0px;height:4px;line-height:4px;font-size:3.2px;color:#333;font-weight:normal;font-family:'Liberation Serif',serif;">November 4, 2022</div><div class="t" style="left:57px;top:468.5px;height:9px;line-height:9px;font-size:7px;color:#222;font-weight:bold;font-family:'Liberation Sans',sans-serif;">Acknowledgements</div><svg class="a" style="left:52px;top:480px;" width="120" height="40" viewBox="0 0 120 40">
<g transform="translate(-52,-480)">
<rect x="55.5" y="494" width="15.5" height="22.5" fill="#2c4a55"/><ellipse cx="63" cy="503" rx="4" ry="5" fill="#d9b79a"/><path d="M56 516.5 Q63 508 70.5 516.5Z" fill="#e6d2b0"/><path d="M59 500 Q63 494 67 500" fill="#3a2a20"/>
<rect x="80" y="494" width="15" height="22.5" fill="#1e2a3a"/><ellipse cx="87.5" cy="503" rx="4" ry="5" fill="#caa58a"/><path d="M80 516.5 Q87.5 508 95 516.5Z" fill="#2a2a2a"/>
<rect x="109" y="494" width="17" height="22.5" fill="#6b8c4a"/><ellipse cx="117.5" cy="503" rx="4.2" ry="5" fill="#c99a78"/><path d="M109 516.5 Q117.5 507 126 516.5Z" fill="#e9e9f0"/><path d="M112 514 L117 509 L123 514" stroke="#e08a30" stroke-width="1.2" fill="none"/><path d="M113 499 Q117.5 492 122 499" fill="#111"/>
<rect x="141" y="494" width="15" height="22.5" fill="#c9c9c9"/><ellipse cx="148.5" cy="503" rx="4" ry="5" fill="#d8b49a"/><path d="M141 516.5 Q148.5 507 156 516.5Z" fill="#222"/><path d="M146.5 509 L148.5 516 L150.5 509Z" fill="#fff"/>
<rect x="80" y="482" width="6" height="7" fill="#b8442a" opacity=".8"/><rect x="110" y="483" width="16" height="6" fill="#3b5ca8" opacity=".7"/><rect x="141" y="483" width="14" height="6" fill="#777" opacity=".55"/>
</g></svg><div class="a" style="left:53px;top:518.5px;width:20px;height:1.5px;background:#222;opacity:.7;"></div><div class="a" style="left:77px;top:518.5px;width:21px;height:1.5px;background:#222;opacity:.7;"></div><div class="a" style="left:106px;top:518.5px;width:23px;height:1.5px;background:#222;opacity:.7;"></div><div class="a" style="left:137px;top:518.5px;width:24px;height:1.5px;background:#222;opacity:.7;"></div><div class="a" style="left:60px;top:524px;width:14px;height:1.2000000000000455px;background:#666;opacity:.5;"></div><div class="a" style="left:62px;top:527.5px;width:10px;height:1.2000000000000455px;background:#666;opacity:.5;"></div><div class="a" style="left:81px;top:524px;width:14px;height:1.2000000000000455px;background:#666;opacity:.5;"></div><div class="a" style="left:83px;top:527.5px;width:10px;height:1.2000000000000455px;background:#666;opacity:.5;"></div><div class="a" style="left:110px;top:524px;width:16px;height:1.2000000000000455px;background:#666;opacity:.5;"></div><div class="a" style="left:112px;top:527.5px;width:12px;height:1.2000000000000455px;background:#666;opacity:.5;"></div><div class="a" style="left:142px;top:524px;width:12px;height:1.2000000000000455px;background:#666;opacity:.5;"></div><div class="a" style="left:144px;top:527.5px;width:8px;height:1.2000000000000455px;background:#666;opacity:.5;"></div><div class="a" style="left:166px;top:534px;width:4px;height:4px;border-radius:50%;background:#444"></div><div class="t" style="left:57px;top:565.5px;height:9px;line-height:9px;font-size:7px;color:#222;font-weight:bold;font-family:'Liberation Sans',sans-serif;">Outline</div><div class="a" style="left:55px;top:583px;width:68px;height:1.2999999999999545px;background:#c0504d;opacity:.65;"></div><div class="a" style="left:58px;top:587px;width:58px;height:1.2999999999999545px;background:#222;opacity:.65;"></div><div class="a" style="left:58px;top:591.5px;width:62px;height:1.2999999999999545px;background:#222;opacity:.65;"></div><div class="a" style="left:58px;top:596px;width:100px;height:1.2999999999999545px;background:#222;opacity:.65;"></div><div class="a" style="left:55px;top:600.5px;width:30px;height:1.2999999999999545px;background:#c0504d;opacity:.65;"></div><div class="a" style="left:58px;top:605px;width:70px;height:1.2999999999999545px;background:#222;opacity:.65;"></div><div class="a" style="left:58px;top:609.5px;width:68px;height:1.2999999999999545px;background:#222;opacity:.65;"></div><div class="a" style="left:58px;top:614px;width:95px;height:1.2999999999999545px;background:#222;opacity:.65;"></div><div class="a" style="left:58px;top:618px;width:55px;height:1.2999999999999545px;background:#222;opacity:.65;"></div><div class="a" style="left:55px;top:627px;width:70px;height:1px;background:#99a;opacity:.5"></div><div class="a" style="left:55px;top:630px;width:60px;height:1px;background:#99a;opacity:.5"></div><div class="a" style="left:55px;top:633px;width:63px;height:1px;background:#99a;opacity:.5"></div><div class="a" style="left:166px;top:631px;width:4px;height:4px;border-radius:50%;background:#333"></div><div class="a" style="left:42px;top:660px;width:133px;height:76px;background:linear-gradient(#d3eef9 0%,#c2e6f5 62%,#9ad4e8 64%,#86cbe3 100%);"></div><div class="t" style="left:48px;top:663.5px;height:9px;line-height:9px;font-size:6.5px;color:#111;font-weight:bold;font-family:'Liberation Sans',sans-serif;">Motivation</div><svg class="a" style="left:42px;top:660px;" width="133" height="76" viewBox="0 0 133 76"><ellipse cx="19" cy="21" rx="7.5" ry="3.2" fill="#fff" stroke="#777" stroke-width=".6"/><ellipse cx="75" cy="21" rx="7" ry="3" fill="#fff" stroke="#777" stroke-width=".6"/><ellipse cx="42" cy="20" rx="8" ry="4" fill="#f3c02a" stroke="#555" stroke-width=".5"/><path d="M40 15 L44 12 L46 17Z M42 24 L46 27 L47 22Z" fill="#3a6ab0"/><path d="M97 76 Q95 55 108 48 H133 V76Z" fill="#9c9c9c"/><path d="M113 48 L116 34 L119 48 M114 42 H118" fill="none" stroke="#444" stroke-width=".7"/><path d="M31 52 V33" stroke="#444" stroke-width=".6"/><path d="M58 64 L103 46" stroke="#444" stroke-width=".6"/><path d="M2 64 Q6 60 20 60 L30 56 L34 60 Q42 60 44 66 Q40 71 20 71 Q6 71 2 64Z" fill="#8aa4b0" stroke="#456" stroke-width=".5"/><path d="M36 56 Q46 54 50 64 M38 51 Q53 49 56 63 M40 46 Q60 44 62 62" fill="none" stroke="#2a90a8" stroke-width="1.4"/><path d="M0 48 Q10 46 20 48 T40 48 T60 48 T80 48 T100 48" fill="none" stroke="#6cc0dc" stroke-width=".8"/></svg><div class="a" style="left:52px;top:773px;width:113px;height:27px;background:#d9d9d9;"></div><div class="t" style="left:-192px;width:600px;text-align:center;top:777.0px;height:8px;line-height:8px;font-size:6px;color:#111;font-weight:bold;font-family:'Liberation Serif',serif;">PART I</div><div class="t" style="left:-192px;width:600px;text-align:center;top:785.5px;height:7px;line-height:7px;font-size:5.2px;color:#111;font-weight:bold;font-family:'Liberation Serif',serif;">Classical Results on</div><div class="t" style="left:-192px;width:600px;text-align:center;top:792.5px;height:7px;line-height:7px;font-size:5.2px;color:#111;font-weight:bold;font-family:'Liberation Serif',serif;">Covert Communication</div><div class="a" style="left:147px;top:801px;width:11px;height:11px;border-radius:50%;background:#5e4a5e"></div><div class="t" style="left:57px;top:857.0px;height:8px;line-height:8px;font-size:6.2px;color:#222;font-weight:bold;font-family:'Liberation Sans',sans-serif;">Model: binary-input DMCs</div><div class="a" style="left:1337px;top:349px;width:18px;height:414px;background:#dadada;"></div><div class="a" style="left:1337px;top:349px;width:17px;height:16px;background:#fff;border:1px solid #dcdcdc;box-sizing:border-box;"></div><svg class="a" style="left:1341px;top:354px;" width="9" height="5" viewBox="0 0 9 5"><path d="M0 5 L4.5 0 L9 5Z" fill="#555"/></svg><div class="a" style="left:1337px;top:366px;width:17px;height:19px;background:#fff;border:1px solid #d0d0d0;box-sizing:border-box;"></div><div class="a" style="left:1337px;top:763px;width:17px;height:16px;background:#fff;border:1px solid #dcdcdc;box-sizing:border-box;"></div><svg class="a" style="left:1341px;top:769px;" width="9" height="5" viewBox="0 0 9 5"><path d="M0 0 L4.5 5 L9 0Z" fill="#555"/></svg><svg class="a" style="left:1341px;top:785px;" width="9" height="10" viewBox="0 0 9 10"><path d="M0.5 5 L4.5 0.5 L8.5 5 L4.5 3.5Z M0.5 9.5 L4.5 5 L8.5 9.5 L4.5 8Z" fill="#555"/></svg><svg class="a" style="left:1341px;top:803px;" width="9" height="10" viewBox="0 0 9 10"><path d="M0.5 0.5 L4.5 5 L8.5 0.5 L4.5 2Z M0.5 5 L4.5 9.5 L8.5 5 L4.5 6.5Z" fill="#555"/></svg><div class="a" style="left:360px;top:357px;width:837px;height:471px;background:#fff;box-shadow:0 0 0 1px #d8d8d8;"></div><svg width="0" height="0" style="position:absolute"><defs>
<filter id="grunge" x="0" y="0" width="100%" height="100%">
<feTurbulence type="fractalNoise" baseFrequency="0.55" numOctaves="3" seed="3" result="n"/>
<feColorMatrix in="n" type="matrix" values="0 0 0 0 1  0 0 0 0 1  0 0 0 0 1  6 0 0 0 -2.8" result="w"/>
<feComposite in="w" in2="SourceGraphic" operator="in" result="c"/><feGaussianBlur in="c" stdDeviation="0.4"/>
</filter>
<filter id="grunge2" x="0" y="0" width="100%" height="100%">
<feTurbulence type="fractalNoise" baseFrequency="0.5" numOctaves="3" seed="7" result="n"/>
<feColorMatrix in="n" type="matrix" values="0 0 0 0 1  0 0 0 0 1  0 0 0 0 1  6 0 0 0 -2.7" result="w"/>
<feComposite in="w" in2="SourceGraphic" operator="in"/>
</filter>
<linearGradient id="logoG" gradientUnits="userSpaceOnUse" x1="0" y1="0" x2="0" y2="50"><stop offset="0" stop-color="#c2d4dc"/><stop offset="0.45" stop-color="#5a8aa4"/><stop offset="1" stop-color="#0a4670"/></linearGradient>
</defs></svg><div class="a" style="left:423px;top:449px;width:701px;height:6px;background:#d3d3d3;"></div><div class="a" style="left:423px;top:459px;width:701px;height:187px;background:#d5d5d5;"></div><div class="a" style="left:423px;top:650px;width:701px;height:6px;background:#d3d3d3;"></div><svg class="a" style="left:423px;top:449px;opacity:.6;" width="701" height="207" viewBox="0 0 701 207"><rect x="0" y="0" width="701" height="6" fill="#fff" filter="url(#grunge2)"/><rect x="0" y="10" width="225" height="187" fill="#fff" filter="url(#grunge)"/><rect x="225" y="10" width="39" height="187" fill="#fff" filter="url(#grunge)" opacity=".45"/><rect x="225" y="75" width="39" height="70" fill="#fff" filter="url(#grunge)"/><rect x="264" y="10" width="385" height="187" fill="#fff" filter="url(#grunge)"/><rect x="649" y="10" width="41" height="187" fill="#fff" filter="url(#grunge)" opacity=".45"/><rect x="649" y="95" width="41" height="102" fill="#fff" filter="url(#grunge)"/><rect x="690" y="10" width="11" height="187" fill="#fff" filter="url(#grunge)"/><rect x="0" y="201" width="701" height="6" fill="#fff" filter="url(#grunge2)"/></svg><div class="t" style="left:437px;top:514px;font-family:'Liberation Sans',sans-serif;font-weight:normal;-webkit-text-stroke:1px #111;font-size:41px;line-height:50px;color:#111;letter-spacing:2.45px;">Covert Communication:</div><div class="t" style="left:438px;top:556px;font-family:'Liberation Serif',serif;font-size:31.4px;line-height:36px;color:#111;">From Information-theoretic Limits to Code Designs</div><div class="a" style="left:403px;top:448px;width:32px;height:32px;border-radius:50%;background:linear-gradient(160deg,#2f8ef5,#5ab4ff);border:2px solid #f4f8ff;box-shadow:0 0 3px rgba(0,0,0,.25);"></div><div class="t" style="left:121px;width:600px;text-align:center;top:459.0px;height:14px;line-height:14px;font-size:10px;color:#fff;font-weight:bold;font-family:'Liberation Sans',sans-serif;">02:26</div><div class="a" style="left:1021px;top:635px;width:74px;height:74px;border-radius:50%;background:#66546a;"></div><svg class="a" style="left:1021px;top:635px;" width="74" height="74" viewBox="0 0 74 74"><defs><clipPath id="pc"><circle cx="37" cy="37" r="37"/></clipPath></defs><g clip-path="url(#pc)"><rect width="74" height="40" fill="#fff" filter="url(#grunge)" opacity=".3"/><rect y="40" width="74" height="34" fill="#fff" filter="url(#grunge)" opacity=".12"/></g></svg><div class="a" style="left:1027px;top:641px;width:62px;height:62px;border-radius:50%;border:2px solid #f4eef4;box-sizing:border-box;"></div><svg class="a" style="left:437px;top:707px;" width="143" height="50" viewBox="0 0 143 50"><g><rect x="0" y="1.0" width="101" height="1.9" rx="0.9" fill="url(#logoG)"/><rect x="105" y="1.0" width="38" height="1.9" rx="0.9" fill="url(#logoG)"/><rect x="0" y="5.1" width="99" height="1.9" rx="0.9" fill="url(#logoG)"/><rect x="103" y="5.1" width="40" height="1.9" rx="0.9" fill="url(#logoG)"/><rect x="0" y="9.2" width="94" height="1.9" rx="0.9" fill="url(#logoG)"/><rect x="99" y="9.2" width="44" height="1.9" rx="0.9" fill="url(#logoG)"/><rect x="0" y="13.3" width="84" height="1.9" rx="0.9" fill="url(#logoG)"/><rect x="91" y="13.3" width="52" height="1.9" rx="0.9" fill="url(#logoG)"/><rect x="0" y="17.4" width="71" height="1.9" rx="0.9" fill="url(#logoG)"/><rect x="79" y="17.4" width="64" height="1.9" rx="0.9" fill="url(#logoG)"/><rect x="0" y="21.5" width="60" height="1.9" rx="0.9" fill="url(#logoG)"/><rect x="72" y="21.5" width="71" height="1.9" rx="0.9" fill="url(#logoG)"/><rect x="0" y="25.6" width="52" height="1.9" rx="0.9" fill="url(#logoG)"/><rect x="70" y="25.6" width="73" height="1.9" rx="0.9" fill="url(#logoG)"/><rect x="0" y="29.7" width="45" height="1.9" rx="0.9" fill="url(#logoG)"/><rect x="54" y="29.7" width="8" height="1.9" rx="0.9" fill="url(#logoG)"/><rect x="72" y="29.7" width="71" height="1.9" rx="0.9" fill="url(#logoG)"/><rect x="0" y="33.8" width="38" height="1.9" rx="0.9" fill="url(#logoG)"/><rect x="50" y="33.8" width="11" height="1.9" rx="0.9" fill="url(#logoG)"/><rect x="84" y="33.8" width="59" height="1.9" rx="0.9" fill="url(#logoG)"/><rect x="0" y="37.9" width="34" height="1.9" rx="0.9" fill="url(#logoG)"/><rect x="51" y="37.9" width="13" height="1.9" rx="0.9" fill="url(#logoG)"/><rect x="94" y="37.9" width="49" height="1.9" rx="0.9" fill="url(#logoG)"/><rect x="0" y="42.0" width="27" height="1.9" rx="0.9" fill="url(#logoG)"/><rect x="47" y="42.0" width="24" height="1.9" rx="0.9" fill="url(#logoG)"/><rect x="108" y="42.0" width="35" height="1.9" rx="0.9" fill="url(#logoG)"/><rect x="0" y="46.1" width="16" height="1.9" rx="0.9" fill="url(#logoG)"/><rect x="42" y="46.1" width="35" height="1.9" rx="0.9" fill="url(#logoG)"/><rect x="126" y="46.1" width="17" height="1.9" rx="0.9" fill="url(#logoG)"/></g></svg><svg class="a" style="left:437px;top:707px;" width="143" height="50" viewBox="0 0 143 50"><rect x="0" y="1.0" width="143" height="2.2" fill="none"/><rect x="0" y="5.1" width="143" height="2.2" fill="none"/><rect x="0" y="9.2" width="143" height="2.2" fill="none"/><rect x="0" y="13.3" width="143" height="2.2" fill="none"/><rect x="0" y="17.4" width="143" height="2.2" fill="none"/><rect x="0" y="21.5" width="143" height="2.2" fill="none"/><rect x="0" y="25.6" width="143" height="2.2" fill="none"/><rect x="0" y="29.7" width="143" height="2.2" fill="none"/><rect x="0" y="33.8" width="143" height="2.2" fill="none"/><rect x="0" y="37.9" width="143" height="2.2" fill="none"/><rect x="0" y="42.0" width="143" height="2.2" fill="none"/><rect x="0" y="46.1" width="143" height="2.2" fill="none"/></svg><div class="t" style="left:436px;top:765px;font-family:'Liberation Serif',serif;font-size:12px;line-height:16px;color:#333;letter-spacing:4.6px;-webkit-text-stroke:0.3px #333;">上海人工智能实验室</div><div class="t" style="left:437px;top:780px;font-family:'Liberation Serif',serif;font-size:8.3px;line-height:12px;color:#333;">Shanghai Artificial Intelligence Laboratory</div><div class="t" style="left:680px;top:699px;font-family:'Liberation Serif',serif;font-weight:bold;font-size:20.8px;line-height:28px;color:#111;">Qiaosheng Zhang <span style="font-weight:normal">(张乔生)</span></div><svg class="a" style="left:680px;top:722px;" width="95" height="3" viewBox="0 0 95 3"><path d="M0 1.5 Q1 0 2 1.5 T4 1.5 T6 1.5 T8 1.5 T10 1.5 T12 1.5 T14 1.5 T16 1.5 T18 1.5 T20 1.5 T22 1.5 T24 1.5 T26 1.5 T28 1.5 T30 1.5 T32 1.5 T34 1.5 T36 1.5 T38 1.5 T40 1.5 T42 1.5 T44 1.5 T46 1.5 T48 1.5 T50 1.5 T52 1.5 T54 1.5 T56 1.5 T58 1.5 T60 1.5 T62 1.5 T64 1.5 T66 1.5 T68 1.5 T70 1.5 T72 1.5 T74 1.5 T76 1.5 T78 1.5 T80 1.5 T82 1.5 T84 1.5 T86 1.5 T88 1.5 T90 1.5 T92 1.5 T94 1.5 T96 1.5 T98 1.5 T100 1.5" fill="none" stroke="#e06060" stroke-width="0.7"/></svg><div class="t" style="left:620px;top:741.5px;font-family:'Liberation Serif',serif;font-size:20.9px;line-height:28px;color:#111;">Shanghai Artificial Intelligence Laboratory</div><div class="t" style="left:696px;top:780px;font-family:'Liberation Serif',serif;font-size:20.8px;line-height:28px;color:#111;">November 4, 2022</div><svg class="a" style="left:1000px;top:649px;" width="14" height="20" viewBox="0 0 14 20"><path d="M1 1 V15 L4.5 11.5 L7.5 18 L10 17 L7 10.5 H12Z" fill="#fff" stroke="#333" stroke-width="1"/></svg><svg class="a" style="left:1206px;top:722px;" width="12" height="18" viewBox="0 0 12 18"><path d="M1 1 V14 L4.2 10.8 L6.8 16 L9 15 L6.5 9.8 H11Z" fill="#22c8b4" stroke="#111" stroke-width="1"/></svg><div class="a" style="left:216px;top:838px;width:1121px;height:34px;background:#e6e6e6;"></div><div class="a" style="left:216px;top:838px;width:1121px;height:1px;background:#d0d0d0;"></div><div class="t" style="left:228px;top:844.5px;height:21px;line-height:21px;font-size:15px;color:#555;font-weight:normal;font-family:'Liberation Sans',sans-serif;">单击此处添加备注</div><div class="a" style="left:1337px;top:840px;width:17px;height:31px;background:#fff;border:1px solid #dcdcdc;box-sizing:border-box;"></div><div class="a" style="left:1337px;top:855px;width:17px;height:1px;background:#dcdcdc;"></div><svg class="a" style="left:1341px;top:845px;" width="9" height="5" viewBox="0 0 9 5"><path d="M0 5 L4.5 0 L9 5Z" fill="#555"/></svg><svg class="a" style="left:1341px;top:861px;" width="9" height="5" viewBox="0 0 9 5"><path d="M0 0 L4.5 5 L9 0Z" fill="#555"/></svg><div class="a" style="left:3px;top:872px;width:1352px;height:23px;background:#f3f2f1;"></div><div class="a" style="left:3px;top:872px;width:1352px;height:1px;background:#e0dfde;"></div><div class="a" style="left:3px;top:895px;width:1352px;height:3px;background:linear-gradient(#0a0a0a,#1a1616 70%,#2c2f34);"></div><div class="t" style="left:11px;top:875.0px;height:18px;line-height:18px;font-size:13px;color:#444;font-weight:normal;font-family:'Liberation Sans',sans-serif;">幻灯片 第 1 张，共 41 张</div><div class="t" style="left:186px;top:875.0px;height:18px;line-height:18px;font-size:13px;color:#444;font-weight:normal;font-family:'Liberation Sans',sans-serif;">中文(中国)</div><svg class="a" style="left:913px;top:876px;" width="16" height="16" viewBox="0 0 16 16"><path d="M1 7 H15 M1 10.5 H15 M1 14 H15" stroke="#555" stroke-width="1.2"/><path d="M5 5 L8 2 L11 5" fill="none" stroke="#555" stroke-width="1.1"/></svg><div class="t" style="left:931px;top:875.0px;height:18px;line-height:18px;font-size:13px;color:#333;font-weight:normal;font-family:'Liberation Sans',sans-serif;">备注</div><div class="a" style="left:976px;top:873px;width:41px;height:22px;background:#d4d3d2;"></div><svg class="a" style="left:990px;top:877px;" width="15" height="14" viewBox="0 0 15 14"><rect x="1" y="1" width="13" height="11" fill="none" stroke="#444" stroke-width="1.2"/><rect x="4" y="3.5" width="7" height="5" fill="none" stroke="#444" stroke-width="1"/></svg><svg class="a" style="left:1031px;top:877px;" width="16" height="14" viewBox="0 0 16 14"><rect x="1" y="1" width="6" height="5" fill="none" stroke="#444" stroke-width="1.2"/><rect x="9" y="1" width="6" height="5" fill="none" stroke="#444" stroke-width="1.2"/><rect x="1" y="8" width="6" height="5" fill="none" stroke="#444" stroke-width="1.2"/><rect x="9" y="8" width="6" height="5" fill="none" stroke="#444" stroke-width="1.2"/></svg><svg class="a" style="left:1073px;top:877px;" width="16" height="14" viewBox="0 0 16 14"><path d="M1 2 Q4.5 0.5 8 2 Q11.5 0.5 15 2 V13 Q11.5 11.5 8 13 Q4.5 11.5 1 13Z M8 2 V13" fill="none" stroke="#444" stroke-width="1.2"/></svg><svg class="a" style="left:1115px;top:876px;" width="16" height="16" viewBox="0 0 16 16"><rect x="1.5" y="1.5" width="13" height="8" fill="none" stroke="#444" stroke-width="1.2"/><path d="M8 9.5 V14 M4 14.5 H12" stroke="#444" stroke-width="1.2"/><rect x="5" y="3.5" width="6" height="3" fill="none" stroke="#444" stroke-width="0.9"/></svg><div class="a" style="left:1150px;top:884px;width:8px;height:1.2999999999999545px;background:#888;"></div><div class="a" style="left:1165px;top:884px;width:104px;height:1.2999999999999545px;background:#555;"></div><div class="a" style="left:1193px;top:878px;width:6px;height:12px;background:#777;"></div><div class="a" style="left:1216px;top:881px;width:1px;height:7px;background:#555;"></div><svg class="a" style="left:1274px;top:879px;" width="10" height="10" viewBox="0 0 10 10"><path d="M5 0 V10 M0 5 H10" stroke="#666" stroke-width="1.1"/></svg><div class="t" style="left:1295px;top:875.0px;height:18px;line-height:18px;font-size:13px;color:#333;font-weight:normal;font-family:'Liberation Sans',sans-serif;">62%</div><svg class="a" style="left:1335px;top:876px;" width="17" height="17" viewBox="0 0 17 17"><rect x="5" y="5" width="7" height="7" fill="none" stroke="#444" stroke-width="1.2"/><path d="M8.5 0.5 L6.5 2.5 H10.5Z M8.5 16.5 L6.5 14.5 H10.5Z M0.5 8.5 L2.5 6.5 V10.5Z M16.5 8.5 L14.5 6.5 V10.5Z" fill="#444"/></svg><div class="a" style="left:1355px;top:25px;width:285px;height:1025px;background:linear-gradient(90deg,#53585c 0%,#474b4f 25%,#2e3033 60%,#0c0c0d 85%,#000 100%);"></div><div class="a" style="left:1362px;top:64px;width:272px;height:153px;background:#222427;border:1px solid #3b3e42;box-sizing:border-box;border-radius:3px;"></div><div class="a" style="left:1362px;top:223px;width:272px;height:153px;background:#222427;border:1px solid #3b3e42;box-sizing:border-box;border-radius:3px;"></div><div class="a" style="left:1362px;top:382px;width:272px;height:153px;background:#222427;border:1px solid #1f6e4f;box-sizing:border-box;border-radius:3px;border-width:2px;"></div><div class="a" style="left:1362px;top:541px;width:272px;height:153px;background:#222427;border:1px solid #3b3e42;box-sizing:border-box;border-radius:3px;"></div><div class="a" style="left:1362px;top:700px;width:272px;height:153px;background:#222427;border:1px solid #3b3e42;box-sizing:border-box;border-radius:3px;"></div><div class="a" style="left:1362px;top:859px;width:272px;height:153px;background:#222427;border:1px solid #3b3e42;box-sizing:border-box;border-radius:3px;"></div><div class="a" style="left:1460px;top:97.5px;width:75px;height:75px;border-radius:50%;overflow:hidden;"><svg width="75" height="75" viewBox="0 0 75 75"><defs><linearGradient id="sky" x1="0" y1="0" x2="0" y2="1"><stop offset="0" stop-color="#2a6ccc"/><stop offset="1" stop-color="#b4d2ef"/></linearGradient><filter id="jb"><feGaussianBlur stdDeviation="0.6"/></filter></defs><rect width="75" height="42" fill="url(#sky)"/><g filter="url(#jb)"><path d="M0 36 Q10 32 20 35 Q30 31 40 34 Q55 31 75 35 V40 H0Z" fill="#eef3f8"/><rect y="40" width="75" height="35" fill="#2f64a8"/><path d="M0 54 Q6 44 14 46 L22 52 Q40 56 52 64 Q60 72 56 75 H0Z" fill="#f3f3f1"/><path d="M6 58 L28 72 M10 66 L40 54 M40 60 L48 75" stroke="#d43a30" stroke-width="1.1"/><path d="M11 40 Q14 48 12 54" stroke="#666" stroke-width="1.5" fill="none"/><circle cx="38" cy="21" r="3.6" fill="#111"/><path d="M32 25 Q38 23 44 25 L46 40 H31Z" fill="#1b1b1b"/><path d="M32 27 L18 36 M44 27 L57 22" stroke="#1b1b1b" stroke-width="2.6" stroke-linecap="round"/><path d="M34 40 L33 58 L36 60 M42 40 L46 55 L44 60" stroke="#151515" stroke-width="3" fill="none"/></g></svg></div><div class="a" style="left:1362px;top:201px;width:50px;height:16px;background:rgba(20,22,25,0.78);border-radius:0 3px 0 0;"></div><svg class="a" style="left:1368px;top:204px;" width="11" height="13" viewBox="0 0 11 13"><rect x="3" y="0.5" width="4.5" height="7.5" rx="2.2" fill="#fff"/><path d="M1 5.5 Q1 10 5.25 10 Q9.5 10 9.5 5.5" fill="none" stroke="#fff" stroke-width="1.3"/><rect x="4.6" y="10" width="1.3" height="2.5" fill="#fff"/><path d="M0.5 11.5 L10 1" stroke="#e0443a" stroke-width="1.4"/></svg><div class="t" style="left:1380px;top:203.0px;height:12px;line-height:12px;font-size:9px;color:#f0f0f0;font-weight:normal;font-family:'Liberation Sans',sans-serif;">@JP.Xu</div><svg class="a" style="left:1364px;top:225px;overflow:hidden" width="267" height="150" viewBox="0 0 267 150">
<defs><radialGradient id="wall2" cx="0.55" cy="0.45" r="0.75"><stop offset="0" stop-color="#dadada"/><stop offset="0.6" stop-color="#cdcdcd"/><stop offset="1" stop-color="#b9b9b9"/></radialGradient>
<filter id="bl2"><feGaussianBlur stdDeviation="1.2"/></filter><filter id="bl2b"><feGaussianBlur stdDeviation="4"/></filter></defs>
<rect width="267" height="150" fill="url(#wall2)"/>
<g filter="url(#bl2b)"><rect x="-5" y="-5" width="277" height="13" fill="#a2a2a2"/><path d="M-5 0 L30 12 V155 H-5Z" fill="#bcc0c0"/></g>
<g filter="url(#bl2)">
<path d="M64 150 Q78 133 118 129 L144 131 L170 129 Q208 133 222 150Z" fill="#dcdde1"/>
<path d="M128 129 L144 150 L160 129Z" fill="#2f2f2f"/>
<rect x="130" y="108" width="28" height="24" fill="#a88a78"/>
<ellipse cx="144" cy="88" rx="36" ry="42" fill="#b49a88"/><ellipse cx="144" cy="72" rx="41" ry="22" fill="#b49a88"/>
<ellipse cx="108" cy="82" rx="5" ry="9" fill="#a88a78"/><ellipse cx="181" cy="82" rx="5" ry="9" fill="#a88a78"/>
<path d="M102 82 Q94 28 144 24 Q194 26 186 82 Q184 70 180 62 Q162 58 144 62 Q124 58 108 64 Q105 70 102 82Z" fill="#141414"/>
<circle cx="128" cy="79" r="12" fill="none" stroke="#3b2f28" stroke-width="2.3"/><circle cx="163" cy="80" r="12" fill="none" stroke="#3b2f28" stroke-width="2.3"/>
<path d="M140 78 Q145 75 151 78" fill="none" stroke="#999" stroke-width="1.2"/>
<path d="M121 79 Q128 76 135 79 M156 80 Q163 77 170 80" stroke="#4a3a32" stroke-width="2" fill="none"/>
<path d="M138 101 Q144 104 150 101" stroke="#8a6a5a" stroke-width="1.5" fill="none"/>
<path d="M131 114 Q144 119 157 114" stroke="#7a5a50" stroke-width="2" fill="none"/>
</g>
</svg><div class="a" style="left:1364px;top:360px;width:44px;height:16px;background:rgba(20,22,25,0.78);border-radius:0 3px 0 0;"></div><svg class="a" style="left:1367px;top:363px;" width="11" height="13" viewBox="0 0 11 13"><rect x="3" y="0.5" width="4.5" height="7.5" rx="2.2" fill="#fff"/><path d="M1 5.5 Q1 10 5.25 10 Q9.5 10 9.5 5.5" fill="none" stroke="#fff" stroke-width="1.3"/><rect x="4.6" y="10" width="1.3" height="2.5" fill="#fff"/></svg><div class="t" style="left:1380px;top:362.0px;height:12px;line-height:12px;font-size:8.6px;color:#f0f0f0;font-weight:normal;font-family:'Liberation Sans',sans-serif;">张乔生</div><svg class="a" style="left:1364px;top:384px;overflow:hidden" width="267" height="150" viewBox="0 0 267 150">
<defs><linearGradient id="bg3" x1="0" y1="0" x2="1" y2="0"><stop offset="0" stop-color="#b8c6ce"/><stop offset="0.35" stop-color="#e2e8eb"/><stop offset="1" stop-color="#e6eaec"/></linearGradient>
<filter id="bl3"><feGaussianBlur stdDeviation="5"/></filter><filter id="bl3b"><feGaussianBlur stdDeviation="1.3"/></filter></defs>
<rect width="267" height="150" fill="url(#bg3)"/>
<g filter="url(#bl3)"><path d="M0 15 L65 70 V150 H52 V78 L0 35Z" fill="#8799a6"/><rect x="5" y="75" width="45" height="75" fill="#a6b8c4"/><rect x="0" y="0" width="90" height="30" fill="#eef2f4"/>
<path d="M170 150 L172 95 L210 75 L238 112 V150Z" fill="#8a7262"/><rect x="140" y="60" width="40" height="30" fill="#d6d0cc"/></g>
<g filter="url(#bl3b)">
<path d="M50 150 Q58 122 100 114 L142 113 L186 114 Q232 122 242 150Z" fill="#1f2d8a"/>
<path d="M118 112 Q142 136 166 112Z" fill="#efdcd2"/>
<rect x="124" y="92" width="36" height="24" fill="#e3c3b2"/>
<ellipse cx="142" cy="74" rx="37" ry="44" fill="#edd2c4"/>
<ellipse cx="142" cy="52" rx="43" ry="28" fill="#edd2c4"/>
<ellipse cx="104" cy="70" rx="5" ry="9" fill="#e0bba8"/><ellipse cx="181" cy="70" rx="5" ry="9" fill="#e0bba8"/>
<path d="M99 66 Q90 4 142 2 Q194 6 187 68 Q175 44 165 36 Q150 30 132 38 Q112 44 99 66Z" fill="#2c2826"/>
<rect x="106" y="55" width="25" height="21" rx="8" fill="none" stroke="#c2b8b2" stroke-width="2"/><rect x="140" y="55" width="28" height="21" rx="8" fill="none" stroke="#c2b8b2" stroke-width="2"/>
<path d="M131 61 H140" stroke="#c2b8b2" stroke-width="1.5"/>
<path d="M112 65 Q118 62 125 65 M147 65 Q154 62 161 65" stroke="#5a4a42" stroke-width="1.8" fill="none"/>
<path d="M135 80 Q137 86 140 88" stroke="#d6ae9c" stroke-width="1.5" fill="none"/>
<path d="M128 99 Q141 104 155 99" stroke="#cf7a7a" stroke-width="3" fill="none"/>
</g>
</svg><div class="a" style="left:1364px;top:519px;width:14px;height:15px;background:#f08a24;"></div><svg class="a" style="left:1366px;top:521px;" width="11" height="11" viewBox="0 0 11 11"><circle cx="5.5" cy="3.5" r="2.5" fill="#fff"/><path d="M1 10.5 Q1 6.5 5.5 6.5 Q10 6.5 10 10.5Z" fill="#fff"/></svg><div class="a" style="left:1378px;top:519px;width:37px;height:15px;background:rgba(20,22,25,0.78);border-radius:0 3px 0 0;"></div><svg class="a" style="left:1382px;top:520px;" width="11" height="13" viewBox="0 0 11 13"><rect x="3" y="0.5" width="4.5" height="7.5" rx="2.2" fill="#fff"/><path d="M1 5.5 Q1 10 5.25 10 Q9.5 10 9.5 5.5" fill="none" stroke="#fff" stroke-width="1.3"/><rect x="4.6" y="10" width="1.3" height="2.5" fill="#fff"/></svg><div class="t" style="left:1396px;top:520.0px;height:12px;line-height:12px;font-size:8.6px;color:#f0f0f0;font-weight:normal;font-family:'Liberation Sans',sans-serif;">周琳</div><div class="a" style="left:1460px;top:574.5px;width:75px;height:75px;border-radius:50%;overflow:hidden;background:#1170ef;"></div><div class="t" style="left:1197px;width:600px;text-align:center;top:604.0px;height:18px;line-height:18px;font-size:13px;color:#fff;font-weight:normal;font-family:'Liberation Sans',sans-serif;">V</div><div class="a" style="left:1362px;top:678px;width:68px;height:16px;background:rgba(20,22,25,0.78);border-radius:0 3px 0 0;"></div><svg class="a" style="left:1367px;top:679px;" width="11" height="13" viewBox="0 0 11 13"><rect x="3" y="0.5" width="4.5" height="7.5" rx="2.2" fill="#fff"/><path d="M1 5.5 Q1 10 5.25 10 Q9.5 10 9.5 5.5" fill="none" stroke="#fff" stroke-width="1.3"/><rect x="4.6" y="10" width="1.3" height="2.5" fill="#fff"/></svg><div class="t" style="left:1380px;top:679.0px;height:12px;line-height:12px;font-size:9px;color:#f0f0f0;font-weight:normal;font-family:'Liberation Sans',sans-serif;">Vincent Tan</div><div class="a" style="left:1460px;top:733.5px;width:75px;height:75px;border-radius:50%;overflow:hidden;"><svg width="75" height="75" viewBox="0 0 75 75"><rect width="75" height="75" fill="#5e94d0"/><path d="M38 75 L36 50 Q40 42 50 42 Q60 44 63 56 L66 75Z" fill="#5066ad"/><path d="M21 75 L22 56 Q30 52 38 56 L40 75Z" fill="#9a98b8"/><path d="M40 4 L46 17 Q56 14 64 18 L70 12 L72 30 Q74 38 66 42 Q56 48 46 44 Q36 40 36 30 Q36 20 40 17Z" fill="#5268b0"/><path d="M64 15 L70 12 L71 28 Q66 24 64 15Z" fill="#d98d8d"/><ellipse cx="39" cy="30" rx="1.6" ry="3" fill="#f0d84a"/><ellipse cx="45" cy="30" rx="1.6" ry="3" fill="#f0d84a"/><path d="M37 34 Q44 31 51 36 Q50 42 44 42 Q38 40 37 34Z" fill="#f4f4f8"/><circle cx="40" cy="35" r="1.3" fill="#111"/><path d="M28 43 Q34 40 41 44 Q40 52 36 55 Q30 52 28 43Z" fill="#f0b830"/><path d="M13 68 Q16 56 24 53 Q28 56 26 62 Q22 68 16 70Z" fill="#f6f6f8"/><path d="M33 72 Q36 60 44 57 Q50 60 48 66 Q44 72 38 74Z" fill="#f6f6f8"/></svg></div><div class="a" style="left:1362px;top:837px;width:54px;height:16px;background:rgba(20,22,25,0.78);border-radius:0 3px 0 0;"></div><div class="t" style="left:1364px;top:838.0px;height:12px;line-height:12px;font-size:9px;color:#f0f0f0;font-weight:normal;font-family:'Liberation Sans',sans-serif;">BJTU-Yu Yan</div><div class="a" style="left:1460px;top:892.5px;width:75px;height:75px;border-radius:50%;overflow:hidden;"><svg width="75" height="75" viewBox="0 0 75 75"><defs><filter id="dgb"><feGaussianBlur stdDeviation="0.9"/></filter></defs><rect width="75" height="75" fill="#8b8b87"/><g filter="url(#dgb)"><path d="M10 50 Q8 30 14 14 L26 24 Q38 20 50 24 L60 18 Q62 30 66 40 Q72 56 64 75 H14 Q8 64 10 50Z" fill="#d8a878"/><path d="M14 16 L24 25 L18 32Z M60 19 L56 30 L52 25Z" fill="#f0d8c0"/><path d="M4 44 Q20 36 38 46 Q58 36 72 44 Q74 62 60 70 Q40 76 20 70 Q6 62 4 44Z" fill="#f2ece6"/><path d="M20 75 Q30 66 40 66 Q52 66 60 75Z" fill="#d8b08a"/><ellipse cx="38.5" cy="41" rx="9.5" ry="7.5" fill="#161616"/><path d="M34 48 Q38 58 42 48" fill="#333"/><path d="M24 53 Q38 62 54 53" stroke="#333" stroke-width="1.6" fill="none"/><circle cx="23.5" cy="29.5" r="2" fill="#2a2018"/><circle cx="47.5" cy="31" r="2" fill="#2a2018"/><path d="M0 46 Q8 42 18 48 Q20 60 22 70 L10 75 H0Z" fill="#d99a94"/><path d="M75 44 Q66 42 60 48 Q62 58 66 64 L75 62Z" fill="#d99a94"/></g></svg></div><div class="a" style="left:1362px;top:996px;width:29px;height:16px;background:rgba(20,22,25,0.78);border-radius:0 3px 0 0;"></div><div class="t" style="left:1364px;top:997.0px;height:12px;line-height:12px;font-size:8.6px;color:#f0f0f0;font-weight:normal;font-family:'Liberation Sans',sans-serif;">吴应臻</div><div class="a" style="left:1640px;top:25px;width:278px;height:1025px;background:#fff;"></div><div class="a" style="left:1640px;top:25px;width:2px;height:1025px;background:#d9dadc;"></div><div class="a" style="left:1642px;top:25px;width:276px;height:1.5px;background:#e6e7e9;"></div><div class="a" style="left:1900px;top:26px;width:18px;height:21px;background:#eef0f3;"></div><div class="a" style="left:1642px;top:46.5px;width:276px;height:1.5px;background:#e6e7e9;"></div><svg class="a" style="left:1644px;top:30px;" width="11" height="12" viewBox="0 0 11 12"><circle cx="5.5" cy="3" r="2.6" fill="#8a8a8a"/><path d="M0.5 11.5 Q0.5 6.5 5.5 6.5 Q10.5 6.5 10.5 11.5Z" fill="#8a8a8a"/></svg><div class="t" style="left:1658px;top:29.5px;height:13px;line-height:13px;font-size:9.5px;color:#333;font-weight:normal;font-family:'Liberation Sans',sans-serif;">成员(35)</div><svg class="a" style="left:1876px;top:34px;" width="12" height="3" viewBox="0 0 12 3"><circle cx="1.5" cy="1.5" r="1.1" fill="#333"/><circle cx="6" cy="1.5" r="1.1" fill="#333"/><circle cx="10.5" cy="1.5" r="1.1" fill="#333"/></svg><svg class="a" style="left:1889px;top:31px;" width="9" height="9" viewBox="0 0 9 9"><path d="M1 1 L8 8 M8 1 L1 8" stroke="#222" stroke-width="1.3"/></svg><svg class="a" style="left:1904px;top:32px;" width="10" height="8" viewBox="0 0 10 8"><path d="M1 1 H9 M1 4 H9 M1 7 H9" stroke="#aaa" stroke-width="1"/></svg><div class="a" style="left:1649px;top:50px;width:263px;height:22px;background:#fff;border:1px solid #d9dce1;border-radius:3px;box-sizing:border-box;"></div><svg class="a" style="left:1654px;top:55px;" width="11" height="12" viewBox="0 0 11 12"><circle cx="5" cy="5" r="3.8" fill="none" stroke="#555" stroke-width="1.3"/><path d="M7.8 8 L10 10.5" stroke="#555" stroke-width="1.4"/></svg><div class="t" style="left:1667px;top:54.5px;height:13px;line-height:13px;font-size:9.5px;color:#aaa;font-weight:normal;font-family:'Liberation Sans',sans-serif;">搜索成员</div><div class="a" style="left:1719px;top:52px;width:183px;height:26px;background:#2a2d31;border-radius:4px;"></div><svg class="a" style="left:1727px;top:59px;" width="11" height="13" viewBox="0 0 11 13"><rect x="3" y="0.5" width="4.5" height="7.5" rx="2.2" fill="#666"/><path d="M1 5.5 Q1 10 5.25 10 Q9.5 10 9.5 5.5" fill="none" stroke="#666" stroke-width="1.2"/><rect x="4.6" y="10" width="1.3" height="2.5" fill="#666"/><path d="M0.5 11.5 L10 1" stroke="#d04a3a" stroke-width="1.3"/></svg><div class="a" style="left:1745px;top:58px;width:1px;height:14px;background:#43464a;"></div><div class="t" style="left:1753px;top:58.5px;height:13px;line-height:13px;font-size:9.5px;color:#fff;font-weight:normal;font-family:'Liberation Sans',sans-serif;letter-spacing:-0.1px;">正在讲话: 周琳; 张乔生;</div><svg class="a" style="left:1858px;top:57px;" width="35" height="17" viewBox="0 0 35 17"><path d="M2 8.5 L8.5 2 L15 8.5 L8.5 15Z" fill="#44474b"/><path d="M11 8.5 L17.5 2 L24 8.5 L17.5 15Z" fill="#3c3f43"/><path d="M20 8.5 L26.5 2 L33 8.5 L26.5 15Z" fill="#44474b"/></svg><div class="a" style="left:1653.5px;top:89.8px;width:22.4px;height:22.4px;border-radius:50%;overflow:hidden"><svg width="22.4" height="22.4" viewBox="0 0 22 22"><rect width="22" height="11" fill="#4a8fdc"/><rect y="11" width="22" height="11" fill="#2e6fb8"/><path d="M0 14 Q8 12 14 18 L16 22 H0Z" fill="#f2f2f0"/><circle cx="11" cy="6.5" r="1.5" fill="#111"/><path d="M9 8 H13 L14 13 H8Z M8 9 L3 11 M13 9 L18 8" fill="#111" stroke="#111"/></svg></div><div class="t" style="left:1684px;top:88.0px;height:13px;line-height:13px;font-size:9.6px;color:#1a1a1a;font-weight:normal;font-family:'Liberation Sans',sans-serif;">@JP.Xu</div><div class="t" style="left:1684px;top:101.0px;height:13px;line-height:13px;font-size:9.6px;color:#888;font-weight:normal;font-family:'Liberation Sans',sans-serif;">(我)</div><svg class="a" style="left:1899px;top:95px;" width="10" height="12" viewBox="0 0 10 12"><rect x="2.5" y="0.5" width="4" height="7" rx="2" fill="#c8c8c8"/><path d="M0.8 5 Q0.8 9.5 4.5 9.5 Q8.2 9.5 8.2 5" fill="none" stroke="#c8c8c8" stroke-width="1"/><path d="M4.5 9.5 V11.5 M2 11.5 H7" stroke="#c8c8c8" stroke-width="1"/><path d="M0 11 L9.5 0.5" stroke="#e56a55" stroke-width="1.1"/></svg><div class="a" style="left:1653.5px;top:122.8px;width:22.4px;height:22.4px;border-radius:50%;overflow:hidden"><div style="width:100%;height:100%;background:radial-gradient(circle at 50% 45%,#e9dfc8,#d6c7a6)"></div></div><div class="t" style="left:1684px;top:121.0px;height:13px;line-height:13px;font-size:9.6px;color:#1a1a1a;font-weight:normal;font-family:'Liberation Sans',sans-serif;">周琳</div><div class="t" style="left:1684px;top:134.0px;height:13px;line-height:13px;font-size:9.6px;color:#888;font-weight:normal;font-family:'Liberation Sans',sans-serif;">(主持人)</div><svg class="a" style="left:1881px;top:128px;" width="10" height="12" viewBox="0 0 10 12"><rect x="2.5" y="0.5" width="4" height="7" rx="2" fill="#c8c8c8"/><path d="M2.5 4 H6.5 V5.5 A2 2 0 0 1 2.5 5.5Z" fill="#3cc84a"/><path d="M0.8 5 Q0.8 9.5 4.5 9.5 Q8.2 9.5 8.2 5" fill="none" stroke="#c8c8c8" stroke-width="1"/><path d="M4.5 9.5 V11.5 M2 11.5 H7" stroke="#c8c8c8" stroke-width="1"/></svg><svg class="a" style="left:1898px;top:130.5px;" width="11" height="7" viewBox="0 0 11 7"><rect x="0.5" y="0.5" width="7.5" height="6" fill="#c8c8c8"/><path d="M8 3.2 L11 0.8 V6 L8 3.7Z" fill="#c8c8c8"/></svg><div class="a" style="left:1653.5px;top:155.8px;width:22.4px;height:22.4px;border-radius:50%;overflow:hidden"><svg width="22.4" height="22.4" viewBox="0 0 22 22"><rect width="22" height="22" fill="#9aa6b4"/><rect width="22" height="8" fill="#7a8ba0"/><path d="M8 22 V12 Q11 8 14 12 V22Z" fill="#37404a"/><circle cx="11" cy="9" r="2.2" fill="#c9a89a"/></svg></div><div class="t" style="left:1684px;top:160.5px;height:13px;line-height:13px;font-size:9.6px;color:#1a1a1a;font-weight:normal;font-family:'Liberation Sans',sans-serif;">张乔生</div><svg class="a" style="left:1863px;top:162px;" width="10" height="10" viewBox="0 0 10 10"><rect x="0.5" y="0.5" width="9" height="6.5" fill="#c8c8c8"/><path d="M3 9 H7" stroke="#c8c8c8"/><path d="M3 5 L7 2" stroke="#fff" stroke-width="0.8"/></svg><svg class="a" style="left:1881px;top:161px;" width="10" height="12" viewBox="0 0 10 12"><rect x="2.5" y="0.5" width="4" height="7" rx="2" fill="#c8c8c8"/><path d="M0.8 5 Q0.8 9.5 4.5 9.5 Q8.2 9.5 8.2 5" fill="none" stroke="#c8c8c8" stroke-width="1"/><path d="M4.5 9.5 V11.5 M2 11.5 H7" stroke="#c8c8c8" stroke-width="1"/></svg><svg class="a" style="left:1898px;top:163.5px;" width="11" height="7" viewBox="0 0 11 7"><rect x="0.5" y="0.5" width="7.5" height="6" fill="#c8c8c8"/><path d="M8 3.2 L11 0.8 V6 L8 3.7Z" fill="#c8c8c8"/></svg><div class="a" style="left:1653.5px;top:188.8px;width:22.4px;height:22.4px;border-radius:50%;overflow:hidden"><div style="width:100%;height:100%;background:#0f6ff0;color:#fff;font-size:9px;line-height:22.4px;text-align:center;font-family:'Liberation Sans',sans-serif">V</div></div><div class="t" style="left:1684px;top:193.5px;height:13px;line-height:13px;font-size:9.6px;color:#1a1a1a;font-weight:normal;font-family:'Liberation Sans',sans-serif;">Vincent Tan</div><svg class="a" style="left:1881px;top:194px;" width="10" height="12" viewBox="0 0 10 12"><rect x="2.5" y="0.5" width="4" height="7" rx="2" fill="#c8c8c8"/><path d="M0.8 5 Q0.8 9.5 4.5 9.5 Q8.2 9.5 8.2 5" fill="none" stroke="#c8c8c8" stroke-width="1"/><path d="M4.5 9.5 V11.5 M2 11.5 H7" stroke="#c8c8c8" stroke-width="1"/></svg><svg class="a" style="left:1898px;top:196.5px;" width="11" height="7" viewBox="0 0 11 7"><rect x="0.5" y="0.5" width="7.5" height="6" fill="#c8c8c8"/><path d="M8 3.2 L11 0.8 V6 L8 3.7Z" fill="#c8c8c8"/><path d="M0 7.5 L9 -0.5" stroke="#e56a55" stroke-width="1.1"/></svg><div class="a" style="left:1653.5px;top:221.8px;width:22.4px;height:22.4px;border-radius:50%;overflow:hidden"><svg width="22.4" height="22.4" viewBox="0 0 22 22"><rect width="22" height="22" fill="#fff"/><path d="M5 8 Q11 0 17 8Z" fill="#2b3a4a"/><ellipse cx="11" cy="12" rx="6" ry="5" fill="#f4f0ec"/><path d="M5 17 Q11 14 17 17 V22 H5Z" fill="#c0392b"/><circle cx="9" cy="11" r="1" fill="#222"/><circle cx="13" cy="11" r="1" fill="#222"/></svg></div><div class="t" style="left:1684px;top:226.5px;height:13px;line-height:13px;font-size:9.6px;color:#1a1a1a;font-weight:normal;font-family:'Liberation Sans',sans-serif;">NULL</div><svg class="a" style="left:1881px;top:227px;" width="10" height="12" viewBox="0 0 10 12"><rect x="2.5" y="0.5" width="4" height="7" rx="2" fill="#c8c8c8"/><path d="M0.8 5 Q0.8 9.5 4.5 9.5 Q8.2 9.5 8.2 5" fill="none" stroke="#c8c8c8" stroke-width="1"/><path d="M4.5 9.5 V11.5 M2 11.5 H7" stroke="#c8c8c8" stroke-width="1"/><path d="M0 11 L9.5 0.5" stroke="#e56a55" stroke-width="1.1"/></svg><svg class="a" style="left:1898px;top:229.5px;" width="11" height="7" viewBox="0 0 11 7"><rect x="0.5" y="0.5" width="7.5" height="6" fill="#c8c8c8"/><path d="M8 3.2 L11 0.8 V6 L8 3.7Z" fill="#c8c8c8"/><path d="M0 7.5 L9 -0.5" stroke="#e56a55" stroke-width="1.1"/></svg><div class="a" style="left:1653.5px;top:254.8px;width:22.4px;height:22.4px;border-radius:50%;overflow:hidden"><div style="width:100%;height:100%;background:#0f6ff0;color:#fff;font-size:8px;line-height:22.4px;text-align:center;font-family:'Liberation Sans',sans-serif">庆喆</div></div><div class="t" style="left:1684px;top:259.5px;height:13px;line-height:13px;font-size:9.6px;color:#1a1a1a;font-weight:normal;font-family:'Liberation Sans',sans-serif;">曾庆喆</div><svg class="a" style="left:1881px;top:260px;" width="10" height="12" viewBox="0 0 10 12"><rect x="2.5" y="0.5" width="4" height="7" rx="2" fill="#c8c8c8"/><path d="M0.8 5 Q0.8 9.5 4.5 9.5 Q8.2 9.5 8.2 5" fill="none" stroke="#c8c8c8" stroke-width="1"/><path d="M4.5 9.5 V11.5 M2 11.5 H7" stroke="#c8c8c8" stroke-width="1"/><path d="M0 11 L9.5 0.5" stroke="#e56a55" stroke-width="1.1"/></svg><svg class="a" style="left:1898px;top:262.5px;" width="11" height="7" viewBox="0 0 11 7"><rect x="0.5" y="0.5" width="7.5" height="6" fill="#c8c8c8"/><path d="M8 3.2 L11 0.8 V6 L8 3.7Z" fill="#c8c8c8"/><path d="M0 7.5 L9 -0.5" stroke="#e56a55" stroke-width="1.1"/></svg><div class="a" style="left:1653.5px;top:287.8px;width:22.4px;height:22.4px;border-radius:50%;overflow:hidden"><svg width="22.4" height="22.4" viewBox="0 0 22 22"><rect width="22" height="22" fill="#f4f4f8"/><path d="M2 9 Q5 1 12 3 Q21 2 20 11 Q22 19 13 20 Q4 22 2 14Z" fill="#dfe3f2"/><path d="M4 7 Q9 4 13 9 Q17 14 12 18 M15 4 Q19 9 16 16 M6 15 Q9 11 11 14" stroke="#7f86c4" stroke-width="1.6" fill="none"/><path d="M3 11 Q5 9 7 12" stroke="#d88" stroke-width="1.2" fill="none"/></svg></div><div class="t" style="left:1684px;top:292.5px;height:13px;line-height:13px;font-size:9.6px;color:#1a1a1a;font-weight:normal;font-family:'Liberation Sans',sans-serif;">邓航</div><svg class="a" style="left:1881px;top:293px;" width="10" height="12" viewBox="0 0 10 12"><rect x="2.5" y="0.5" width="4" height="7" rx="2" fill="#c8c8c8"/><path d="M0.8 5 Q0.8 9.5 4.5 9.5 Q8.2 9.5 8.2 5" fill="none" stroke="#c8c8c8" stroke-width="1"/><path d="M4.5 9.5 V11.5 M2 11.5 H7" stroke="#c8c8c8" stroke-width="1"/><path d="M0 11 L9.5 0.5" stroke="#e56a55" stroke-width="1.1"/></svg><svg class="a" style="left:1898px;top:295.5px;" width="11" height="7" viewBox="0 0 11 7"><rect x="0.5" y="0.5" width="7.5" height="6" fill="#c8c8c8"/><path d="M8 3.2 L11 0.8 V6 L8 3.7Z" fill="#c8c8c8"/><path d="M0 7.5 L9 -0.5" stroke="#e56a55" stroke-width="1.1"/></svg><div class="a" style="left:1653.5px;top:320.8px;width:22.4px;height:22.4px;border-radius:50%;overflow:hidden"><div style="width:100%;height:100%;background:#0f6ff0;color:#fff;font-size:8px;line-height:22.4px;text-align:center;font-family:'Liberation Sans',sans-serif">海川</div></div><div class="t" style="left:1684px;top:325.5px;height:13px;line-height:13px;font-size:9.6px;color:#1a1a1a;font-weight:normal;font-family:'Liberation Sans',sans-serif;">丁海川</div><svg class="a" style="left:1881px;top:326px;" width="10" height="12" viewBox="0 0 10 12"><rect x="2.5" y="0.5" width="4" height="7" rx="2" fill="#c8c8c8"/><path d="M0.8 5 Q0.8 9.5 4.5 9.5 Q8.2 9.5 8.2 5" fill="none" stroke="#c8c8c8" stroke-width="1"/><path d="M4.5 9.5 V11.5 M2 11.5 H7" stroke="#c8c8c8" stroke-width="1"/><path d="M0 11 L9.5 0.5" stroke="#e56a55" stroke-width="1.1"/></svg><svg class="a" style="left:1898px;top:328.5px;" width="11" height="7" viewBox="0 0 11 7"><rect x="0.5" y="0.5" width="7.5" height="6" fill="#c8c8c8"/><path d="M8 3.2 L11 0.8 V6 L8 3.7Z" fill="#c8c8c8"/><path d="M0 7.5 L9 -0.5" stroke="#e56a55" stroke-width="1.1"/></svg><div class="a" style="left:1653.5px;top:353.8px;width:22.4px;height:22.4px;border-radius:50%;overflow:hidden"><svg width="22.4" height="22.4" viewBox="0 0 22 22"><rect width="22" height="22" fill="#3a302a"/><rect x="0" y="0" width="22" height="8" fill="#5a4c40"/><path d="M8 22 L9 9 Q11 6 13 9 L15 22Z" fill="#6b5a55"/><circle cx="11" cy="7" r="2" fill="#b88"/><path d="M9 10 L13 16" stroke="#a33" stroke-width="1.2"/></svg></div><div class="t" style="left:1684px;top:358.5px;height:13px;line-height:13px;font-size:9.6px;color:#1a1a1a;font-weight:normal;font-family:'Liberation Sans',sans-serif;">汉鹏飞</div><svg class="a" style="left:1881px;top:359px;" width="10" height="12" viewBox="0 0 10 12"><rect x="2.5" y="0.5" width="4" height="7" rx="2" fill="#c8c8c8"/><path d="M0.8 5 Q0.8 9.5 4.5 9.5 Q8.2 9.5 8.2 5" fill="none" stroke="#c8c8c8" stroke-width="1"/><path d="M4.5 9.5 V11.5 M2 11.5 H7" stroke="#c8c8c8" stroke-width="1"/><path d="M0 11 L9.5 0.5" stroke="#e56a55" stroke-width="1.1"/></svg><svg class="a" style="left:1898px;top:361.5px;" width="11" height="7" viewBox="0 0 11 7"><rect x="0.5" y="0.5" width="7.5" height="6" fill="#c8c8c8"/><path d="M8 3.2 L11 0.8 V6 L8 3.7Z" fill="#c8c8c8"/><path d="M0 7.5 L9 -0.5" stroke="#e56a55" stroke-width="1.1"/></svg><div class="a" style="left:1653.5px;top:386.8px;width:22.4px;height:22.4px;border-radius:50%;overflow:hidden"><svg width="22.4" height="22.4" viewBox="0 0 22 22"><rect width="22" height="12" fill="#3b78c4"/><rect y="9" width="22" height="4" fill="#b9cde0"/><path d="M0 22 V14 L6 11 L12 13 L18 11 L22 14 V22Z" fill="#9a7e5e"/></svg></div><div class="t" style="left:1684px;top:391.5px;height:13px;line-height:13px;font-size:9.6px;color:#1a1a1a;font-weight:normal;font-family:'Liberation Sans',sans-serif;">霍炎</div><svg class="a" style="left:1881px;top:392px;" width="10" height="12" viewBox="0 0 10 12"><rect x="2.5" y="0.5" width="4" height="7" rx="2" fill="#c8c8c8"/><path d="M0.8 5 Q0.8 9.5 4.5 9.5 Q8.2 9.5 8.2 5" fill="none" stroke="#c8c8c8" stroke-width="1"/><path d="M4.5 9.5 V11.5 M2 11.5 H7" stroke="#c8c8c8" stroke-width="1"/><path d="M0 11 L9.5 0.5" stroke="#e56a55" stroke-width="1.1"/></svg><svg class="a" style="left:1898px;top:394.5px;" width="11" height="7" viewBox="0 0 11 7"><rect x="0.5" y="0.5" width="7.5" height="6" fill="#c8c8c8"/><path d="M8 3.2 L11 0.8 V6 L8 3.7Z" fill="#c8c8c8"/><path d="M0 7.5 L9 -0.5" stroke="#e56a55" stroke-width="1.1"/></svg><div class="t" style="left:1684px;top:424.5px;height:13px;line-height:13px;font-size:9.6px;color:#1a1a1a;font-weight:normal;font-family:'Liberation Sans',sans-serif;">李勇剑</div><svg class="a" style="left:1881px;top:425px;" width="10" height="12" viewBox="0 0 10 12"><rect x="2.5" y="0.5" width="4" height="7" rx="2" fill="#c8c8c8"/><path d="M0.8 5 Q0.8 9.5 4.5 9.5 Q8.2 9.5 8.2 5" fill="none" stroke="#c8c8c8" stroke-width="1"/><path d="M4.5 9.5 V11.5 M2 11.5 H7" stroke="#c8c8c8" stroke-width="1"/><path d="M0 11 L9.5 0.5" stroke="#e56a55" stroke-width="1.1"/></svg><svg class="a" style="left:1898px;top:427.5px;" width="11" height="7" viewBox="0 0 11 7"><rect x="0.5" y="0.5" width="7.5" height="6" fill="#c8c8c8"/><path d="M8 3.2 L11 0.8 V6 L8 3.7Z" fill="#c8c8c8"/><path d="M0 7.5 L9 -0.5" stroke="#e56a55" stroke-width="1.1"/></svg><div class="a" style="left:1653.5px;top:452.8px;width:22.4px;height:22.4px;border-radius:50%;overflow:hidden"><div style="width:100%;height:100%;background:#0f6ff0;color:#fff;font-size:8px;line-height:22.4px;text-align:center;font-family:'Liberation Sans',sans-serif">力沛</div></div><div class="t" style="left:1684px;top:457.5px;height:13px;line-height:13px;font-size:9.6px;color:#1a1a1a;font-weight:normal;font-family:'Liberation Sans',sans-serif;">刘力沛</div><svg class="a" style="left:1881px;top:458px;" width="10" height="12" viewBox="0 0 10 12"><rect x="2.5" y="0.5" width="4" height="7" rx="2" fill="#c8c8c8"/><path d="M0.8 5 Q0.8 9.5 4.5 9.5 Q8.2 9.5 8.2 5" fill="none" stroke="#c8c8c8" stroke-width="1"/><path d="M4.5 9.5 V11.5 M2 11.5 H7" stroke="#c8c8c8" stroke-width="1"/><path d="M0 11 L9.5 0.5" stroke="#e56a55" stroke-width="1.1"/></svg><svg class="a" style="left:1898px;top:460.5px;" width="11" height="7" viewBox="0 0 11 7"><rect x="0.5" y="0.5" width="7.5" height="6" fill="#c8c8c8"/><path d="M8 3.2 L11 0.8 V6 L8 3.7Z" fill="#c8c8c8"/><path d="M0 7.5 L9 -0.5" stroke="#e56a55" stroke-width="1.1"/></svg><div class="a" style="left:1653.5px;top:485.8px;width:22.4px;height:22.4px;border-radius:50%;overflow:hidden"><div style="width:100%;height:100%;background:radial-gradient(circle at 40% 40%,#e8e4e0,#bdb6b0)"></div></div><div class="t" style="left:1684px;top:490.5px;height:13px;line-height:13px;font-size:9.6px;color:#1a1a1a;font-weight:normal;font-family:'Liberation Sans',sans-serif;">马坚峰</div><svg class="a" style="left:1881px;top:491px;" width="10" height="12" viewBox="0 0 10 12"><rect x="2.5" y="0.5" width="4" height="7" rx="2" fill="#c8c8c8"/><path d="M0.8 5 Q0.8 9.5 4.5 9.5 Q8.2 9.5 8.2 5" fill="none" stroke="#c8c8c8" stroke-width="1"/><path d="M4.5 9.5 V11.5 M2 11.5 H7" stroke="#c8c8c8" stroke-width="1"/><path d="M0 11 L9.5 0.5" stroke="#e56a55" stroke-width="1.1"/></svg><svg class="a" style="left:1898px;top:493.5px;" width="11" height="7" viewBox="0 0 11 7"><rect x="0.5" y="0.5" width="7.5" height="6" fill="#c8c8c8"/><path d="M8 3.2 L11 0.8 V6 L8 3.7Z" fill="#c8c8c8"/><path d="M0 7.5 L9 -0.5" stroke="#e56a55" stroke-width="1.1"/></svg><div class="a" style="left:1653.5px;top:518.8px;width:22.4px;height:22.4px;border-radius:50%;overflow:hidden"><div style="width:100%;height:100%;background:#0f6ff0;color:#fff;font-size:8px;line-height:22.4px;text-align:center;font-family:'Liberation Sans',sans-serif">维荣</div></div><div class="t" style="left:1684px;top:523.5px;height:13px;line-height:13px;font-size:9.6px;color:#1a1a1a;font-weight:normal;font-family:'Liberation Sans',sans-serif;">孟维荣</div><svg class="a" style="left:1881px;top:524px;" width="10" height="12" viewBox="0 0 10 12"><rect x="2.5" y="0.5" width="4" height="7" rx="2" fill="#c8c8c8"/><path d="M0.8 5 Q0.8 9.5 4.5 9.5 Q8.2 9.5 8.2 5" fill="none" stroke="#c8c8c8" stroke-width="1"/><path d="M4.5 9.5 V11.5 M2 11.5 H7" stroke="#c8c8c8" stroke-width="1"/><path d="M0 11 L9.5 0.5" stroke="#e56a55" stroke-width="1.1"/></svg><svg class="a" style="left:1898px;top:526.5px;" width="11" height="7" viewBox="0 0 11 7"><rect x="0.5" y="0.5" width="7.5" height="6" fill="#c8c8c8"/><path d="M8 3.2 L11 0.8 V6 L8 3.7Z" fill="#c8c8c8"/><path d="M0 7.5 L9 -0.5" stroke="#e56a55" stroke-width="1.1"/></svg><div class="a" style="left:1653.5px;top:551.8px;width:22.4px;height:22.4px;border-radius:50%;overflow:hidden"><svg width="22.4" height="22.4" viewBox="0 0 22 22"><rect width="22" height="22" fill="#c45a2a"/><rect x="6" y="2" width="10" height="18" fill="#f0d0a0"/><path d="M8 6 L14 16 M14 6 L10 12" stroke="#222" stroke-width="2"/></svg></div><div class="t" style="left:1684px;top:556.5px;height:13px;line-height:13px;font-size:9.6px;color:#1a1a1a;font-weight:normal;font-family:'Liberation Sans',sans-serif;">潘璺</div><svg class="a" style="left:1881px;top:557px;" width="10" height="12" viewBox="0 0 10 12"><rect x="2.5" y="0.5" width="4" height="7" rx="2" fill="#c8c8c8"/><path d="M0.8 5 Q0.8 9.5 4.5 9.5 Q8.2 9.5 8.2 5" fill="none" stroke="#c8c8c8" stroke-width="1"/><path d="M4.5 9.5 V11.5 M2 11.5 H7" stroke="#c8c8c8" stroke-width="1"/><path d="M0 11 L9.5 0.5" stroke="#e56a55" stroke-width="1.1"/></svg><svg class="a" style="left:1898px;top:559.5px;" width="11" height="7" viewBox="0 0 11 7"><rect x="0.5" y="0.5" width="7.5" height="6" fill="#c8c8c8"/><path d="M8 3.2 L11 0.8 V6 L8 3.7Z" fill="#c8c8c8"/><path d="M0 7.5 L9 -0.5" stroke="#e56a55" stroke-width="1.1"/></svg><div class="a" style="left:1653.5px;top:584.8px;width:22.4px;height:22.4px;border-radius:50%;overflow:hidden"><svg width="22.4" height="22.4" viewBox="0 0 22 22"><rect width="22" height="22" fill="#8a9a7a"/><ellipse cx="11" cy="11" rx="7" ry="6" fill="#f2f2f2"/><circle cx="7" cy="6" r="2.5" fill="#222"/><circle cx="15" cy="6" r="2.5" fill="#222"/><ellipse cx="9" cy="11" rx="1.5" ry="2" fill="#222"/><ellipse cx="13" cy="11" rx="1.5" ry="2" fill="#222"/><path d="M0 18 H22 V22 H0Z" fill="#4a6a3a"/></svg></div><div class="t" style="left:1684px;top:589.5px;height:13px;line-height:13px;font-size:9.6px;color:#1a1a1a;font-weight:normal;font-family:'Liberation Sans',sans-serif;">夏阁淞</div><svg class="a" style="left:1881px;top:590px;" width="10" height="12" viewBox="0 0 10 12"><rect x="2.5" y="0.5" width="4" height="7" rx="2" fill="#c8c8c8"/><path d="M0.8 5 Q0.8 9.5 4.5 9.5 Q8.2 9.5 8.2 5" fill="none" stroke="#c8c8c8" stroke-width="1"/><path d="M4.5 9.5 V11.5 M2 11.5 H7" stroke="#c8c8c8" stroke-width="1"/><path d="M0 11 L9.5 0.5" stroke="#e56a55" stroke-width="1.1"/></svg><svg class="a" style="left:1898px;top:592.5px;" width="11" height="7" viewBox="0 0 11 7"><rect x="0.5" y="0.5" width="7.5" height="6" fill="#c8c8c8"/><path d="M8 3.2 L11 0.8 V6 L8 3.7Z" fill="#c8c8c8"/><path d="M0 7.5 L9 -0.5" stroke="#e56a55" stroke-width="1.1"/></svg><div class="a" style="left:1653.5px;top:617.8px;width:22.4px;height:22.4px;border-radius:50%;overflow:hidden"><div style="width:100%;height:100%;background:radial-gradient(circle at 45% 45%,#d8b89a,#a67c5c)"></div></div><div class="t" style="left:1684px;top:622.5px;height:13px;line-height:13px;font-size:9.6px;color:#1a1a1a;font-weight:normal;font-family:'Liberation Sans',sans-serif;">谢鑫</div><svg class="a" style="left:1881px;top:623px;" width="10" height="12" viewBox="0 0 10 12"><rect x="2.5" y="0.5" width="4" height="7" rx="2" fill="#c8c8c8"/><path d="M0.8 5 Q0.8 9.5 4.5 9.5 Q8.2 9.5 8.2 5" fill="none" stroke="#c8c8c8" stroke-width="1"/><path d="M4.5 9.5 V11.5 M2 11.5 H7" stroke="#c8c8c8" stroke-width="1"/><path d="M0 11 L9.5 0.5" stroke="#e56a55" stroke-width="1.1"/></svg><svg class="a" style="left:1898px;top:625.5px;" width="11" height="7" viewBox="0 0 11 7"><rect x="0.5" y="0.5" width="7.5" height="6" fill="#c8c8c8"/><path d="M8 3.2 L11 0.8 V6 L8 3.7Z" fill="#c8c8c8"/><path d="M0 7.5 L9 -0.5" stroke="#e56a55" stroke-width="1.1"/></svg><div class="a" style="left:1653.5px;top:650.8px;width:22.4px;height:22.4px;border-radius:50%;overflow:hidden"><svg width="22.4" height="22.4" viewBox="0 0 22 22"><rect width="22" height="22" fill="#e8e8e8"/><rect x="0" width="7" height="22" fill="#444"/><path d="M8 22 V10 Q11 5 15 10 V22Z" fill="#111"/><circle cx="11.5" cy="7" r="2.5" fill="#ddd"/><rect x="14" y="12" width="4" height="8" fill="#fff"/></svg></div><div class="t" style="left:1684px;top:655.5px;height:13px;line-height:13px;font-size:9.6px;color:#1a1a1a;font-weight:normal;font-family:'Liberation Sans',sans-serif;">于越</div><svg class="a" style="left:1881px;top:656px;" width="10" height="12" viewBox="0 0 10 12"><rect x="2.5" y="0.5" width="4" height="7" rx="2" fill="#c8c8c8"/><path d="M0.8 5 Q0.8 9.5 4.5 9.5 Q8.2 9.5 8.2 5" fill="none" stroke="#c8c8c8" stroke-width="1"/><path d="M4.5 9.5 V11.5 M2 11.5 H7" stroke="#c8c8c8" stroke-width="1"/><path d="M0 11 L9.5 0.5" stroke="#e56a55" stroke-width="1.1"/></svg><svg class="a" style="left:1898px;top:658.5px;" width="11" height="7" viewBox="0 0 11 7"><rect x="0.5" y="0.5" width="7.5" height="6" fill="#c8c8c8"/><path d="M8 3.2 L11 0.8 V6 L8 3.7Z" fill="#c8c8c8"/><path d="M0 7.5 L9 -0.5" stroke="#e56a55" stroke-width="1.1"/></svg><div class="a" style="left:1653.5px;top:683.8px;width:22.4px;height:22.4px;border-radius:50%;overflow:hidden"><div style="width:100%;height:100%;background:linear-gradient(#7a9a8a,#c9a0a0 60%,#b08080)"></div></div><div class="t" style="left:1684px;top:688.5px;height:13px;line-height:13px;font-size:9.6px;color:#1a1a1a;font-weight:normal;font-family:'Liberation Sans',sans-serif;">张伯洋</div><svg class="a" style="left:1881px;top:689px;" width="10" height="12" viewBox="0 0 10 12"><rect x="2.5" y="0.5" width="4" height="7" rx="2" fill="#c8c8c8"/><path d="M0.8 5 Q0.8 9.5 4.5 9.5 Q8.2 9.5 8.2 5" fill="none" stroke="#c8c8c8" stroke-width="1"/><path d="M4.5 9.5 V11.5 M2 11.5 H7" stroke="#c8c8c8" stroke-width="1"/><path d="M0 11 L9.5 0.5" stroke="#e56a55" stroke-width="1.1"/></svg><svg class="a" style="left:1898px;top:691.5px;" width="11" height="7" viewBox="0 0 11 7"><rect x="0.5" y="0.5" width="7.5" height="6" fill="#c8c8c8"/><path d="M8 3.2 L11 0.8 V6 L8 3.7Z" fill="#c8c8c8"/><path d="M0 7.5 L9 -0.5" stroke="#e56a55" stroke-width="1.1"/></svg><div class="a" style="left:1653.5px;top:716.8px;width:22.4px;height:22.4px;border-radius:50%;overflow:hidden"><svg width="22.4" height="22.4" viewBox="0 0 22 22"><rect width="22" height="22" fill="#a9c8ea"/><path d="M0 22 V12 Q8 8 14 12 Q18 14 22 22Z" fill="#e87a20"/><path d="M2 16 Q8 12 12 16 Q9 22 2 20Z" fill="#c8541a"/></svg></div><div class="t" style="left:1684px;top:721.5px;height:13px;line-height:13px;font-size:9.6px;color:#1a1a1a;font-weight:normal;font-family:'Liberation Sans',sans-serif;">张笑天</div><svg class="a" style="left:1881px;top:722px;" width="10" height="12" viewBox="0 0 10 12"><rect x="2.5" y="0.5" width="4" height="7" rx="2" fill="#c8c8c8"/><path d="M0.8 5 Q0.8 9.5 4.5 9.5 Q8.2 9.5 8.2 5" fill="none" stroke="#c8c8c8" stroke-width="1"/><path d="M4.5 9.5 V11.5 M2 11.5 H7" stroke="#c8c8c8" stroke-width="1"/><path d="M0 11 L9.5 0.5" stroke="#e56a55" stroke-width="1.1"/></svg><svg class="a" style="left:1898px;top:724.5px;" width="11" height="7" viewBox="0 0 11 7"><rect x="0.5" y="0.5" width="7.5" height="6" fill="#c8c8c8"/><path d="M8 3.2 L11 0.8 V6 L8 3.7Z" fill="#c8c8c8"/><path d="M0 7.5 L9 -0.5" stroke="#e56a55" stroke-width="1.1"/></svg><div class="a" style="left:1653.5px;top:749.8px;width:22.4px;height:22.4px;border-radius:50%;overflow:hidden"><svg width="22.4" height="22.4" viewBox="0 0 22 22"><rect width="22" height="22" fill="#ebe8e3"/><path d="M9 22 V10 Q11 7 13 10 V22Z" fill="#555"/><circle cx="11" cy="7" r="2" fill="#777"/><rect x="15" y="14" width="2" height="5" fill="#bbb"/></svg></div><div class="t" style="left:1684px;top:754.5px;height:13px;line-height:13px;font-size:9.6px;color:#1a1a1a;font-weight:normal;font-family:'Liberation Sans',sans-serif;">洲跃</div><svg class="a" style="left:1881px;top:755px;" width="10" height="12" viewBox="0 0 10 12"><rect x="2.5" y="0.5" width="4" height="7" rx="2" fill="#c8c8c8"/><path d="M0.8 5 Q0.8 9.5 4.5 9.5 Q8.2 9.5 8.2 5" fill="none" stroke="#c8c8c8" stroke-width="1"/><path d="M4.5 9.5 V11.5 M2 11.5 H7" stroke="#c8c8c8" stroke-width="1"/><path d="M0 11 L9.5 0.5" stroke="#e56a55" stroke-width="1.1"/></svg><svg class="a" style="left:1898px;top:757.5px;" width="11" height="7" viewBox="0 0 11 7"><rect x="0.5" y="0.5" width="7.5" height="6" fill="#c8c8c8"/><path d="M8 3.2 L11 0.8 V6 L8 3.7Z" fill="#c8c8c8"/><path d="M0 7.5 L9 -0.5" stroke="#e56a55" stroke-width="1.1"/></svg><div class="a" style="left:1653.5px;top:782.8px;width:22.4px;height:22.4px;border-radius:50%;overflow:hidden"><svg width="22.4" height="22.4" viewBox="0 0 22 22"><rect width="22" height="22" fill="#eeeeee"/><circle cx="11" cy="8.5" r="3.5" fill="#c6c6c6"/><path d="M4 18 Q4 12.5 11 12.5 Q18 12.5 18 18Z" fill="#c6c6c6"/></svg></div><div class="t" style="left:1684px;top:787.5px;height:13px;line-height:13px;font-size:9.6px;color:#1a1a1a;font-weight:normal;font-family:'Liberation Sans',sans-serif;">曾亮</div><svg class="a" style="left:1899px;top:788px;" width="10" height="12" viewBox="0 0 10 12"><rect x="2.5" y="0.5" width="4" height="7" rx="2" fill="#c8c8c8"/><path d="M0.8 5 Q0.8 9.5 4.5 9.5 Q8.2 9.5 8.2 5" fill="none" stroke="#c8c8c8" stroke-width="1"/><path d="M4.5 9.5 V11.5 M2 11.5 H7" stroke="#c8c8c8" stroke-width="1"/><path d="M0 11 L9.5 0.5" stroke="#e56a55" stroke-width="1.1"/></svg><div class="a" style="left:1653.5px;top:815.8px;width:22.4px;height:22.4px;border-radius:50%;overflow:hidden"><svg width="22.4" height="22.4" viewBox="0 0 22 22"><rect width="22" height="22" fill="#f0b060"/><rect width="22" height="8" fill="#fff"/><path d="M0 8 Q11 5 22 8 V22 H0Z" fill="#d08a3a"/><path d="M0 14 Q11 10 22 14 V22 H0Z" fill="#3e3a36"/><circle cx="11" cy="14" r="2" fill="#222"/></svg></div><div class="t" style="left:1684px;top:820.5px;height:13px;line-height:13px;font-size:9.6px;color:#1a1a1a;font-weight:normal;font-family:'Liberation Sans',sans-serif;">孙椿淞</div><svg class="a" style="left:1899px;top:821px;" width="10" height="12" viewBox="0 0 10 12"><rect x="2.5" y="0.5" width="4" height="7" rx="2" fill="#c8c8c8"/><path d="M0.8 5 Q0.8 9.5 4.5 9.5 Q8.2 9.5 8.2 5" fill="none" stroke="#c8c8c8" stroke-width="1"/><path d="M4.5 9.5 V11.5 M2 11.5 H7" stroke="#c8c8c8" stroke-width="1"/><path d="M0 11 L9.5 0.5" stroke="#e56a55" stroke-width="1.1"/></svg><div class="a" style="left:1653.5px;top:848.8px;width:22.4px;height:22.4px;border-radius:50%;overflow:hidden"><div style="width:100%;height:100%;background:#0f6ff0;color:#fff;font-size:8px;line-height:22.4px;text-align:center;font-family:'Liberation Sans',sans-serif">田瑶</div></div><div class="t" style="left:1684px;top:853.5px;height:13px;line-height:13px;font-size:9.6px;color:#1a1a1a;font-weight:normal;font-family:'Liberation Sans',sans-serif;">田瑶</div><svg class="a" style="left:1899px;top:854px;" width="10" height="12" viewBox="0 0 10 12"><rect x="2.5" y="0.5" width="4" height="7" rx="2" fill="#c8c8c8"/><path d="M0.8 5 Q0.8 9.5 4.5 9.5 Q8.2 9.5 8.2 5" fill="none" stroke="#c8c8c8" stroke-width="1"/><path d="M4.5 9.5 V11.5 M2 11.5 H7" stroke="#c8c8c8" stroke-width="1"/><path d="M0 11 L9.5 0.5" stroke="#e56a55" stroke-width="1.1"/></svg><div class="a" style="left:1653.5px;top:881.8px;width:22.4px;height:22.4px;border-radius:50%;overflow:hidden"><svg width="22.4" height="22.4" viewBox="0 0 22 22"><rect width="22" height="22" fill="#2a2420"/><ellipse cx="10" cy="12" rx="8" ry="7" fill="#d9b48a"/><path d="M4 6 L6 10 L8 5Z M14 5 L15 10 L18 6Z" fill="#c89870"/><ellipse cx="10" cy="15" rx="4" ry="3" fill="#f0e0d0"/></svg></div><div class="t" style="left:1684px;top:886.5px;height:13px;line-height:13px;font-size:9.6px;color:#1a1a1a;font-weight:normal;font-family:'Liberation Sans',sans-serif;">王仁阁</div><svg class="a" style="left:1899px;top:887px;" width="10" height="12" viewBox="0 0 10 12"><rect x="2.5" y="0.5" width="4" height="7" rx="2" fill="#c8c8c8"/><path d="M0.8 5 Q0.8 9.5 4.5 9.5 Q8.2 9.5 8.2 5" fill="none" stroke="#c8c8c8" stroke-width="1"/><path d="M4.5 9.5 V11.5 M2 11.5 H7" stroke="#c8c8c8" stroke-width="1"/><path d="M0 11 L9.5 0.5" stroke="#e56a55" stroke-width="1.1"/></svg><div class="a" style="left:1653.5px;top:914.8px;width:22.4px;height:22.4px;border-radius:50%;overflow:hidden"><div style="width:100%;height:100%;background:#0f6ff0;color:#fff;font-size:8px;line-height:22.4px;text-align:center;font-family:'Liberation Sans',sans-serif">王瑜</div></div><div class="t" style="left:1684px;top:919.5px;height:13px;line-height:13px;font-size:9.6px;color:#1a1a1a;font-weight:normal;font-family:'Liberation Sans',sans-serif;">王瑜</div><svg class="a" style="left:1899px;top:920px;" width="10" height="12" viewBox="0 0 10 12"><rect x="2.5" y="0.5" width="4" height="7" rx="2" fill="#c8c8c8"/><path d="M0.8 5 Q0.8 9.5 4.5 9.5 Q8.2 9.5 8.2 5" fill="none" stroke="#c8c8c8" stroke-width="1"/><path d="M4.5 9.5 V11.5 M2 11.5 H7" stroke="#c8c8c8" stroke-width="1"/><path d="M0 11 L9.5 0.5" stroke="#e56a55" stroke-width="1.1"/></svg><div class="a" style="left:1653.5px;top:947.8px;width:22.4px;height:22.4px;border-radius:50%;overflow:hidden"><svg width="22.4" height="22.4" viewBox="0 0 22 22"><rect width="22" height="22" fill="#6a8a3a"/><radialGradient id="xc" cx="0.5" cy="0.6" r="0.5"><stop offset="0" stop-color="#f0f0c0"/><stop offset="1" stop-color="#4a6a2a"/></radialGradient><rect width="22" height="22" fill="url(#xc)"/><rect width="22" height="5" fill="#2a3a1a"/></svg></div><div class="t" style="left:1684px;top:952.5px;height:13px;line-height:13px;font-size:9.6px;color:#1a1a1a;font-weight:normal;font-family:'Liberation Sans',sans-serif;">星尘</div><svg class="a" style="left:1899px;top:953px;" width="10" height="12" viewBox="0 0 10 12"><rect x="2.5" y="0.5" width="4" height="7" rx="2" fill="#c8c8c8"/><path d="M0.8 5 Q0.8 9.5 4.5 9.5 Q8.2 9.5 8.2 5" fill="none" stroke="#c8c8c8" stroke-width="1"/><path d="M4.5 9.5 V11.5 M2 11.5 H7" stroke="#c8c8c8" stroke-width="1"/><path d="M0 11 L9.5 0.5" stroke="#e56a55" stroke-width="1.1"/></svg><div class="a" style="left:1653.5px;top:980.8px;width:22.4px;height:22.4px;border-radius:50%;overflow:hidden"><div style="width:100%;height:100%;background:#0f6ff0;color:#fff;font-size:9.5px;line-height:22.4px;text-align:center;font-family:'Liberation Sans',sans-serif">18</div></div><div class="t" style="left:1684px;top:985.5px;height:13px;line-height:13px;font-size:9.6px;color:#1a1a1a;font-weight:normal;font-family:'Liberation Sans',sans-serif;">张启辰+ZY2239118</div><svg class="a" style="left:1899px;top:986px;" width="10" height="12" viewBox="0 0 10 12"><rect x="2.5" y="0.5" width="4" height="7" rx="2" fill="#c8c8c8"/><path d="M0.8 5 Q0.8 9.5 4.5 9.5 Q8.2 9.5 8.2 5" fill="none" stroke="#c8c8c8" stroke-width="1"/><path d="M4.5 9.5 V11.5 M2 11.5 H7" stroke="#c8c8c8" stroke-width="1"/><path d="M0 11 L9.5 0.5" stroke="#e56a55" stroke-width="1.1"/></svg><div class="a" style="left:1642px;top:1006px;width:276px;height:1px;background:#eeeeee;"></div><div class="a" style="left:1718px;top:1021px;width:72px;height:16px;background:#fff;border:1px solid #c9ccd1;border-radius:2px;box-sizing:border-box;"></div><div class="t" style="left:1454px;width:600px;text-align:center;top:1022.0px;height:14px;line-height:14px;font-size:10px;color:#333;font-weight:normal;font-family:'Liberation Sans',sans-serif;">解除静音</div><div class="a" style="left:1801px;top:1021px;width:54px;height:16px;background:#fff;border:1px solid #c9ccd1;border-radius:2px;box-sizing:border-box;"></div><div class="t" style="left:1528px;width:600px;text-align:center;top:1022.0px;height:14px;line-height:14px;font-size:10px;color:#333;font-weight:normal;font-family:'Liberation Sans',sans-serif;">改名</div>
</body></html>
